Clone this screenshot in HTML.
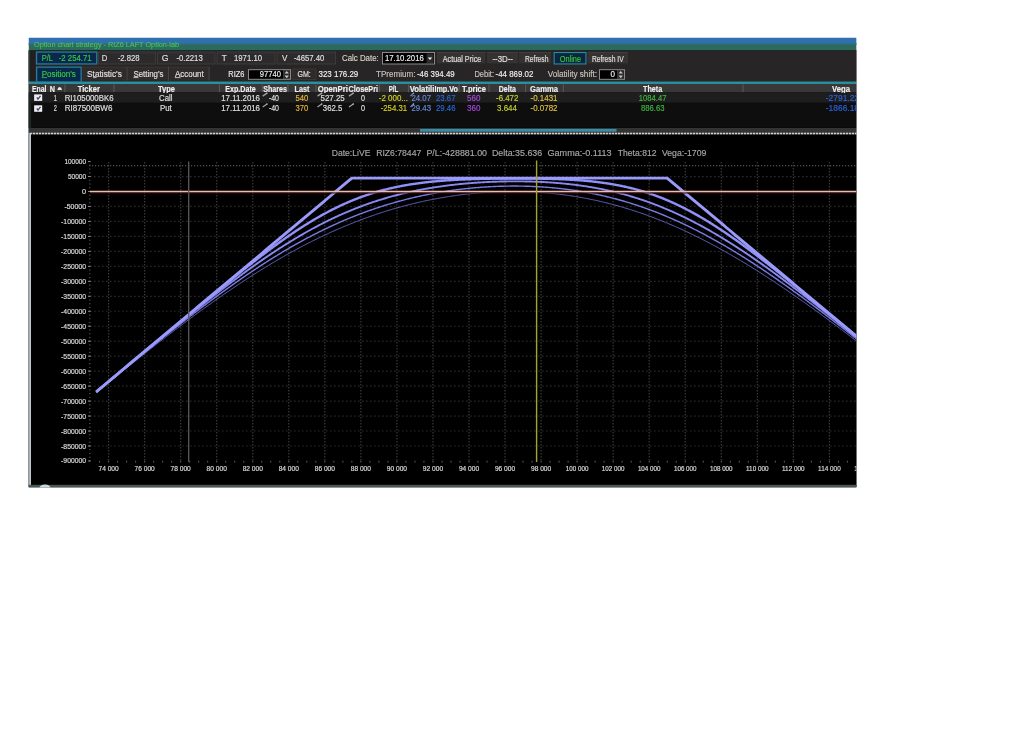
<!DOCTYPE html>
<html><head><meta charset="utf-8"><style>
html,body{margin:0;padding:0;background:#fff;width:1024px;height:742px;overflow:hidden}
svg{display:block;font-family:"Liberation Sans",sans-serif;will-change:transform}
</style></head><body>
<svg width="1024" height="742" viewBox="0 0 1024 742">
<defs><linearGradient id="tg" x1="0" y1="0" x2="0" y2="1"><stop offset="0" stop-color="#3070ae"/><stop offset="1" stop-color="#2e6a5c"/></linearGradient>
<clipPath id="wc"><rect x="28.5" y="37.5" width="828.2" height="450"/></clipPath><clipPath id="cc"><rect x="31" y="134.5" width="825.5" height="350.3"/></clipPath></defs>
<g clip-path="url(#wc)">
<rect x="28.5" y="50" width="828.00" height="437.50" fill="#222222" />
<rect x="28.5" y="37.5" width="828.00" height="6.50" fill="#3070ae" />
<rect x="28.5" y="43.5" width="828.00" height="6.50" fill="#2e6a5c" />
<rect x="28.5" y="43" width="828.0" height="2" fill="url(#tg)"/>
<rect x="28.5" y="50" width="828.00" height="1.00" fill="#1a2a26" />
<text x="34.00" y="47.22" font-size="7.6" fill="#46c850" stroke="#46c850" stroke-width="0.1" textLength="145.00" lengthAdjust="spacingAndGlyphs">Option chart strategy - RIZ6 LAFT Option-lab</text>
<rect x="28.5" y="51" width="828.00" height="30.50" fill="#272525" />
<rect x="28.5" y="51" width="6.50" height="30.50" fill="#231f1f" />
<rect x="35.9" y="51.4" width="61.50" height="13.20" fill="#2a7a9a" />
<rect x="37.2" y="52.7" width="58.90" height="10.60" fill="#08284e" />
<rect x="98" y="51.5" width="58.00" height="13.00" fill="#3c3a3a" />
<rect x="99" y="52.5" width="56.00" height="11.00" fill="#2c2a2a" />
<rect x="99" y="52.5" width="56.00" height="1.00" fill="#343232" />
<rect x="157" y="51.5" width="58.50" height="13.00" fill="#3c3a3a" />
<rect x="158" y="52.5" width="56.50" height="11.00" fill="#2c2a2a" />
<rect x="158" y="52.5" width="56.50" height="1.00" fill="#343232" />
<rect x="216.5" y="51.5" width="59.00" height="13.00" fill="#3c3a3a" />
<rect x="217.5" y="52.5" width="57.00" height="11.00" fill="#2c2a2a" />
<rect x="217.5" y="52.5" width="57.00" height="1.00" fill="#343232" />
<rect x="276.6" y="51.5" width="59.40" height="13.00" fill="#3c3a3a" />
<rect x="277.6" y="52.5" width="57.40" height="11.00" fill="#2c2a2a" />
<rect x="277.6" y="52.5" width="57.40" height="1.00" fill="#343232" />
<text x="41.70" y="61.34" font-size="8.5" fill="#3ccc3c" stroke="#3ccc3c" stroke-width="0.15" textLength="11.30" lengthAdjust="spacingAndGlyphs">P/L</text>
<text x="58.80" y="61.34" font-size="8.5" fill="#3ccc3c" stroke="#3ccc3c" stroke-width="0.15" textLength="32.70" lengthAdjust="spacingAndGlyphs">-2 254.71</text>
<text x="101.70" y="61.34" font-size="8.5" fill="#e0e0e0" stroke="#e0e0e0" stroke-width="0.15" textLength="5.50" lengthAdjust="spacingAndGlyphs">D</text>
<text x="117.70" y="61.34" font-size="8.5" fill="#e0e0e0" stroke="#e0e0e0" stroke-width="0.15" textLength="21.90" lengthAdjust="spacingAndGlyphs">-2.828</text>
<text x="161.80" y="61.34" font-size="8.5" fill="#e0e0e0" stroke="#e0e0e0" stroke-width="0.15" textLength="6.80" lengthAdjust="spacingAndGlyphs">G</text>
<text x="176.40" y="61.34" font-size="8.5" fill="#e0e0e0" stroke="#e0e0e0" stroke-width="0.15" textLength="26.40" lengthAdjust="spacingAndGlyphs">-0.2213</text>
<text x="221.80" y="61.34" font-size="8.5" fill="#e0e0e0" stroke="#e0e0e0" stroke-width="0.15" textLength="5.00" lengthAdjust="spacingAndGlyphs">T</text>
<text x="234.00" y="61.34" font-size="8.5" fill="#e0e0e0" stroke="#e0e0e0" stroke-width="0.15" textLength="28.00" lengthAdjust="spacingAndGlyphs">1971.10</text>
<text x="282.00" y="61.34" font-size="8.5" fill="#e0e0e0" stroke="#e0e0e0" stroke-width="0.15" textLength="5.40" lengthAdjust="spacingAndGlyphs">V</text>
<text x="293.80" y="61.34" font-size="8.5" fill="#e0e0e0" stroke="#e0e0e0" stroke-width="0.15" textLength="30.50" lengthAdjust="spacingAndGlyphs">-4657.40</text>
<text x="342.00" y="61.34" font-size="8.5" fill="#d8d4c8" stroke="#d8d4c8" stroke-width="0.15" textLength="36.70" lengthAdjust="spacingAndGlyphs">Calc Date:</text>
<rect x="382" y="52" width="53.00" height="12.50" fill="#8a8a8a" />
<rect x="383" y="53" width="51.00" height="10.50" fill="#000000" />
<text x="385.00" y="61.34" font-size="8.5" fill="#f0f0f0" stroke="#f0f0f0" stroke-width="0.15" textLength="38.80" lengthAdjust="spacingAndGlyphs">17.10.2016</text>
<rect x="426.5" y="53.5" width="7.00" height="9.50" fill="#2a2a2a" />
<path d="M427.8,57.5 L432.2,57.5 L430,60 Z" fill="#f0f0f0"/>
<rect x="437" y="52" width="48.50" height="12.50" fill="#363232" />
<rect x="437" y="52" width="48.50" height="1.00" fill="#403c3c" />
<rect x="437" y="63.5" width="48.50" height="1.00" fill="#242020" />
<text x="442.70" y="61.94" font-size="8.5" fill="#e0e0e0" stroke="#e0e0e0" stroke-width="0.15" textLength="38.60" lengthAdjust="spacingAndGlyphs">Actual Price</text>
<rect x="487" y="52" width="31.00" height="12.50" fill="#363232" />
<rect x="487" y="52" width="31.00" height="1.00" fill="#403c3c" />
<rect x="487" y="63.5" width="31.00" height="1.00" fill="#242020" />
<text x="492.50" y="61.94" font-size="8.5" fill="#e0e0e0" stroke="#e0e0e0" stroke-width="0.15" textLength="20.50" lengthAdjust="spacingAndGlyphs">--3D--</text>
<rect x="519" y="52" width="32.00" height="12.50" fill="#363232" />
<rect x="519" y="52" width="32.00" height="1.00" fill="#403c3c" />
<rect x="519" y="63.5" width="32.00" height="1.00" fill="#242020" />
<text x="524.90" y="61.94" font-size="8.5" fill="#e0e0e0" stroke="#e0e0e0" stroke-width="0.15" textLength="23.60" lengthAdjust="spacingAndGlyphs">Refresh</text>
<rect x="553.6" y="52" width="32.90" height="12.50" fill="#2a8aa0" />
<rect x="554.7" y="53.1" width="30.70" height="10.30" fill="#0c2640" />
<text x="559.70" y="61.94" font-size="8.5" fill="#38c838" stroke="#38c838" stroke-width="0.15" textLength="21.30" lengthAdjust="spacingAndGlyphs">Online</text>
<rect x="587.6" y="52" width="40.40" height="12.50" fill="#363232" />
<rect x="587.6" y="52" width="40.40" height="1.00" fill="#403c3c" />
<rect x="587.6" y="63.5" width="40.40" height="1.00" fill="#242020" />
<text x="591.90" y="61.94" font-size="8.5" fill="#e0e0e0" stroke="#e0e0e0" stroke-width="0.15" textLength="31.80" lengthAdjust="spacingAndGlyphs">Refresh IV</text>
<rect x="36" y="66.5" width="45.80" height="15.20" fill="#2a7a9a" />
<rect x="37.3" y="67.8" width="43.20" height="13.90" fill="#08284e" />
<rect x="82.3" y="66.7" width="45.30" height="13.80" fill="#2f2b2b" />
<rect x="82.3" y="66.7" width="45.30" height="1.00" fill="#3a3636" />
<line x1="127.1" y1="66.7" x2="127.1" y2="80.5" stroke="#484444" stroke-width="1" />
<rect x="128" y="66.7" width="41.00" height="13.80" fill="#2f2b2b" />
<rect x="128" y="66.7" width="41.00" height="1.00" fill="#3a3636" />
<line x1="168.5" y1="66.7" x2="168.5" y2="80.5" stroke="#484444" stroke-width="1" />
<rect x="169.6" y="66.7" width="40.00" height="13.80" fill="#2f2b2b" />
<rect x="169.6" y="66.7" width="40.00" height="1.00" fill="#3a3636" />
<line x1="209.1" y1="66.7" x2="209.1" y2="80.5" stroke="#484444" stroke-width="1" />
<text x="41.70" y="77.49" font-size="8.5" fill="#3ccc3c" stroke="#3ccc3c" stroke-width="0.15" textLength="34.20" lengthAdjust="spacingAndGlyphs">Position's</text>
<line x1="41.7" y1="77.6" x2="47" y2="77.6" stroke="#3ccc3c" stroke-width="0.8" />
<text x="87.10" y="77.49" font-size="8.5" fill="#e0e0e0" stroke="#e0e0e0" stroke-width="0.15" textLength="34.70" lengthAdjust="spacingAndGlyphs">Statistic's</text>
<line x1="93" y1="77.6" x2="96.5" y2="77.6" stroke="#e0e0e0" stroke-width="0.8" />
<text x="133.40" y="77.49" font-size="8.5" fill="#e0e0e0" stroke="#e0e0e0" stroke-width="0.15" textLength="30.00" lengthAdjust="spacingAndGlyphs">Setting's</text>
<line x1="133.4" y1="77.6" x2="138.5" y2="77.6" stroke="#e0e0e0" stroke-width="0.8" />
<text x="174.90" y="77.49" font-size="8.5" fill="#e0e0e0" stroke="#e0e0e0" stroke-width="0.15" textLength="28.90" lengthAdjust="spacingAndGlyphs">Account</text>
<line x1="174.9" y1="77.6" x2="180.5" y2="77.6" stroke="#e0e0e0" stroke-width="0.8" />
<text x="228.30" y="77.49" font-size="8.5" fill="#e8e8e8" stroke="#e8e8e8" stroke-width="0.15" textLength="16.10" lengthAdjust="spacingAndGlyphs">RIZ6</text>
<rect x="248" y="69.2" width="43.00" height="10.60" fill="#8a8a8a" />
<rect x="249" y="70.2" width="34.50" height="8.60" fill="#000" />
<text x="259.80" y="77.49" font-size="8.5" fill="#f0f0f0" stroke="#f0f0f0" stroke-width="0.15" textLength="21.10" lengthAdjust="spacingAndGlyphs">97740</text>
<rect x="283.5" y="70.2" width="6.50" height="8.60" fill="#2a2a2a" />
<path d="M284.5,73.6 L289,73.6 L286.75,71 Z" fill="#c8c8c8"/><path d="M284.5,75.6 L289,75.6 L286.75,78.2 Z" fill="#c8c8c8"/>
<rect x="292.3" y="68.5" width="24.10" height="11.50" fill="#3a3636" />
<rect x="293.3" y="69.5" width="22.10" height="9.50" fill="#2e2a2a" />
<text x="297.50" y="77.49" font-size="8.5" fill="#e0e0e0" stroke="#e0e0e0" stroke-width="0.15" textLength="13.30" lengthAdjust="spacingAndGlyphs">GM:</text>
<text x="318.50" y="77.49" font-size="8.5" fill="#f0f0f0" stroke="#f0f0f0" stroke-width="0.15" textLength="39.80" lengthAdjust="spacingAndGlyphs">323 176.29</text>
<text x="376.00" y="77.49" font-size="8.5" fill="#c8c4bc" stroke="#c8c4bc" stroke-width="0.15" textLength="39.40" lengthAdjust="spacingAndGlyphs">TPremium:</text>
<text x="416.90" y="77.49" font-size="8.5" fill="#f0f0f0" stroke="#f0f0f0" stroke-width="0.15" textLength="37.80" lengthAdjust="spacingAndGlyphs">-46 394.49</text>
<text x="474.40" y="77.49" font-size="8.5" fill="#c8c4bc" stroke="#c8c4bc" stroke-width="0.15" textLength="19.60" lengthAdjust="spacingAndGlyphs">Debit:</text>
<text x="495.60" y="77.49" font-size="8.5" fill="#f0f0f0" stroke="#f0f0f0" stroke-width="0.15" textLength="37.80" lengthAdjust="spacingAndGlyphs">-44 869.02</text>
<text x="547.70" y="77.49" font-size="8.5" fill="#c8c4bc" stroke="#c8c4bc" stroke-width="0.15" textLength="49.30" lengthAdjust="spacingAndGlyphs">Volatility shift:</text>
<rect x="599" y="69.2" width="26.00" height="10.60" fill="#8a8a8a" />
<rect x="600" y="70.2" width="17.50" height="8.60" fill="#000" />
<text x="610.50" y="77.49" font-size="8.5" fill="#f0f0f0" stroke="#f0f0f0" stroke-width="0.15" textLength="4.50" lengthAdjust="spacingAndGlyphs">0</text>
<rect x="617.5" y="70.2" width="6.50" height="8.60" fill="#2a2a2a" />
<path d="M618.5,73.6 L623,73.6 L620.75,71 Z" fill="#c8c8c8"/><path d="M618.5,75.6 L623,75.6 L620.75,78.2 Z" fill="#c8c8c8"/>
<rect x="28.5" y="50" width="1.30" height="83.00" fill="#2e444a" />
<rect x="28.5" y="81.5" width="828.00" height="2.50" fill="#2a8e9e" />
<rect x="28.5" y="84" width="828.00" height="8.30" fill="#383838" />
<rect x="28.5" y="92.3" width="828.00" height="0.70" fill="#1a1616" />
<line x1="64.9" y1="84.5" x2="64.9" y2="92.2" stroke="#5a5a5a" stroke-width="1" />
<line x1="114" y1="84.5" x2="114" y2="92.2" stroke="#5a5a5a" stroke-width="1" />
<line x1="219.4" y1="84.5" x2="219.4" y2="92.2" stroke="#5a5a5a" stroke-width="1" />
<line x1="262.3" y1="84.5" x2="262.3" y2="92.2" stroke="#5a5a5a" stroke-width="1" />
<line x1="288" y1="84.5" x2="288" y2="92.2" stroke="#5a5a5a" stroke-width="1" />
<line x1="316" y1="84.5" x2="316" y2="92.2" stroke="#5a5a5a" stroke-width="1" />
<line x1="379.4" y1="84.5" x2="379.4" y2="92.2" stroke="#5a5a5a" stroke-width="1" />
<line x1="408.4" y1="84.5" x2="408.4" y2="92.2" stroke="#5a5a5a" stroke-width="1" />
<line x1="459" y1="84.5" x2="459" y2="92.2" stroke="#5a5a5a" stroke-width="1" />
<line x1="489" y1="84.5" x2="489" y2="92.2" stroke="#5a5a5a" stroke-width="1" />
<line x1="525.7" y1="84.5" x2="525.7" y2="92.2" stroke="#5a5a5a" stroke-width="1" />
<line x1="563.3" y1="84.5" x2="563.3" y2="92.2" stroke="#5a5a5a" stroke-width="1" />
<line x1="743" y1="84.5" x2="743" y2="92.2" stroke="#5a5a5a" stroke-width="1" />
<text x="31.90" y="91.64" font-size="8.5" fill="#f0f0f0" font-weight="bold" stroke="#f0f0f0" stroke-width="0.15" textLength="14.60" lengthAdjust="spacingAndGlyphs">Enal</text>
<text x="49.70" y="91.64" font-size="8.5" fill="#f0f0f0" font-weight="bold" stroke="#f0f0f0" stroke-width="0.15" textLength="5.20" lengthAdjust="spacingAndGlyphs">N</text>
<path d="M57.3,89.9 Q57.8,86.9 59.65,86.9 Q61.5,86.9 62,89.9 Z" fill="#e8e8e8"/>
<text x="77.80" y="91.64" font-size="8.5" fill="#f0f0f0" font-weight="bold" stroke="#f0f0f0" stroke-width="0.15" textLength="22.10" lengthAdjust="spacingAndGlyphs">Ticker</text>
<text x="158.00" y="91.64" font-size="8.5" fill="#f0f0f0" font-weight="bold" stroke="#f0f0f0" stroke-width="0.15" textLength="17.00" lengthAdjust="spacingAndGlyphs">Type</text>
<text x="225.30" y="91.64" font-size="8.5" fill="#f0f0f0" font-weight="bold" stroke="#f0f0f0" stroke-width="0.15" textLength="30.50" lengthAdjust="spacingAndGlyphs">Exp.Date</text>
<text x="263.30" y="91.64" font-size="8.5" fill="#f0f0f0" font-weight="bold" stroke="#f0f0f0" stroke-width="0.15" textLength="23.70" lengthAdjust="spacingAndGlyphs">Shares</text>
<text x="294.60" y="91.64" font-size="8.5" fill="#f0f0f0" font-weight="bold" stroke="#f0f0f0" stroke-width="0.15" textLength="14.80" lengthAdjust="spacingAndGlyphs">Last</text>
<text x="317.70" y="91.64" font-size="8.5" fill="#f0f0f0" font-weight="bold" stroke="#f0f0f0" stroke-width="0.15" textLength="30.30" lengthAdjust="spacingAndGlyphs">OpenPri</text>
<text x="348.60" y="91.64" font-size="8.5" fill="#f0f0f0" font-weight="bold" stroke="#f0f0f0" stroke-width="0.15" textLength="29.40" lengthAdjust="spacingAndGlyphs">ClosePri</text>
<text x="388.70" y="91.64" font-size="8.5" fill="#f0f0f0" font-weight="bold" stroke="#f0f0f0" stroke-width="0.15" textLength="9.70" lengthAdjust="spacingAndGlyphs">P/L</text>
<text x="409.70" y="91.64" font-size="8.5" fill="#f0f0f0" font-weight="bold" stroke="#f0f0f0" stroke-width="0.15" textLength="24.70" lengthAdjust="spacingAndGlyphs">Volatili</text>
<text x="434.40" y="91.64" font-size="8.5" fill="#f0f0f0" font-weight="bold" stroke="#f0f0f0" stroke-width="0.15" textLength="23.60" lengthAdjust="spacingAndGlyphs">Imp.Vo</text>
<text x="462.00" y="91.64" font-size="8.5" fill="#f0f0f0" font-weight="bold" stroke="#f0f0f0" stroke-width="0.15" textLength="24.00" lengthAdjust="spacingAndGlyphs">T.price</text>
<text x="498.80" y="91.64" font-size="8.5" fill="#f0f0f0" font-weight="bold" stroke="#f0f0f0" stroke-width="0.15" textLength="17.20" lengthAdjust="spacingAndGlyphs">Delta</text>
<text x="530.00" y="91.64" font-size="8.5" fill="#f0f0f0" font-weight="bold" stroke="#f0f0f0" stroke-width="0.15" textLength="28.00" lengthAdjust="spacingAndGlyphs">Gamma</text>
<text x="643.00" y="91.64" font-size="8.5" fill="#f0f0f0" font-weight="bold" stroke="#f0f0f0" stroke-width="0.15" textLength="19.20" lengthAdjust="spacingAndGlyphs">Theta</text>
<text x="832.00" y="91.64" font-size="8.5" fill="#f0f0f0" font-weight="bold" stroke="#f0f0f0" stroke-width="0.15" textLength="18.00" lengthAdjust="spacingAndGlyphs">Vega</text>
<rect x="28.5" y="93" width="828.00" height="9.60" fill="#1e1e1e" />
<rect x="28.5" y="102.6" width="828.00" height="24.70" fill="#0e0e0e" />
<rect x="28.5" y="127.3" width="828.00" height="0.70" fill="#050505" />
<rect x="28.5" y="93" width="2.70" height="35.00" fill="#1c2626" />
<rect x="34.15" y="94.4" width="8.05" height="6.50" fill="#eeeef6" />
<path d="M36.9,97.4 L38,99.2 L40.5,95.9" stroke="#404864" stroke-width="1.3" fill="none"/>
<text x="53.80" y="100.54" font-size="8.5" fill="#e0e0e0" stroke="#e0e0e0" stroke-width="0.15" textLength="3.10" lengthAdjust="spacingAndGlyphs">1</text>
<text x="64.70" y="100.54" font-size="8.5" fill="#e0e0e0" stroke="#e0e0e0" stroke-width="0.15" textLength="48.90" lengthAdjust="spacingAndGlyphs">RI105000BK6</text>
<text x="159.00" y="100.54" font-size="8.5" fill="#e0e0e0" stroke="#e0e0e0" stroke-width="0.15" textLength="13.50" lengthAdjust="spacingAndGlyphs">Call</text>
<text x="221.25" y="100.54" font-size="8.5" fill="#e0e0e0" stroke="#e0e0e0" stroke-width="0.15" textLength="38.75" lengthAdjust="spacingAndGlyphs">17.11.2016</text>
<line x1="262.7" y1="96.1" x2="267.0" y2="93.1" stroke="#a0a0a0" stroke-width="1.3"/>
<circle cx="267.0" cy="93.1" r="0.7" fill="#c8c8c8"/>
<text x="268.90" y="100.54" font-size="8.5" fill="#e0e0e0" stroke="#e0e0e0" stroke-width="0.15" textLength="10.10" lengthAdjust="spacingAndGlyphs">-40</text>
<text x="295.50" y="100.54" font-size="8.5" fill="#e8b838" stroke="#e8b838" stroke-width="0.15" textLength="12.80" lengthAdjust="spacingAndGlyphs">540</text>
<line x1="317.5" y1="96.1" x2="321.8" y2="93.1" stroke="#a0a0a0" stroke-width="1.3"/>
<circle cx="321.8" cy="93.1" r="0.7" fill="#c8c8c8"/>
<text x="320.50" y="100.54" font-size="8.5" fill="#e0e0e0" stroke="#e0e0e0" stroke-width="0.15" textLength="24.20" lengthAdjust="spacingAndGlyphs">527.25</text>
<line x1="349" y1="96.1" x2="353.3" y2="93.1" stroke="#a0a0a0" stroke-width="1.3"/>
<circle cx="353.3" cy="93.1" r="0.7" fill="#c8c8c8"/>
<text x="361.00" y="100.54" font-size="8.5" fill="#e0e0e0" stroke="#e0e0e0" stroke-width="0.15" textLength="4.00" lengthAdjust="spacingAndGlyphs">0</text>
<text x="378.80" y="100.54" font-size="8.5" fill="#d8d020" stroke="#d8d020" stroke-width="0.15" textLength="29.20" lengthAdjust="spacingAndGlyphs">-2 000...</text>
<line x1="410.5" y1="96.1" x2="413.5" y2="93.1" stroke="#7088d0" stroke-width="1.3"/>
<circle cx="413.5" cy="93.1" r="0.7" fill="#c8c8c8"/>
<text x="411.40" y="100.54" font-size="8.5" fill="#6a88d8" stroke="#6a88d8" stroke-width="0.15" textLength="19.60" lengthAdjust="spacingAndGlyphs">24.07</text>
<text x="436.00" y="100.54" font-size="8.5" fill="#2a68d8" stroke="#2a68d8" stroke-width="0.15" textLength="19.50" lengthAdjust="spacingAndGlyphs">23.67</text>
<text x="467.00" y="100.54" font-size="8.5" fill="#a848e0" stroke="#a848e0" stroke-width="0.15" textLength="13.40" lengthAdjust="spacingAndGlyphs">560</text>
<text x="496.00" y="100.54" font-size="8.5" fill="#c8d430" stroke="#c8d430" stroke-width="0.15" textLength="22.40" lengthAdjust="spacingAndGlyphs">-6.472</text>
<text x="530.50" y="100.54" font-size="8.5" fill="#e0c040" stroke="#e0c040" stroke-width="0.15" textLength="27.00" lengthAdjust="spacingAndGlyphs">-0.1431</text>
<text x="638.75" y="100.54" font-size="8.5" fill="#40b840" stroke="#40b840" stroke-width="0.15" textLength="27.65" lengthAdjust="spacingAndGlyphs">1084.47</text>
<text x="825.80" y="100.54" font-size="8.5" fill="#2a64e0" stroke="#2a64e0" stroke-width="0.15" textLength="33.20" lengthAdjust="spacingAndGlyphs">-2791.22</text>
<rect x="34.15" y="105.30000000000001" width="8.05" height="6.50" fill="#eeeef6" />
<path d="M36.9,108.30000000000001 L38,110.10000000000001 L40.5,106.80000000000001" stroke="#404864" stroke-width="1.3" fill="none"/>
<text x="53.80" y="111.44" font-size="8.5" fill="#e0e0e0" stroke="#e0e0e0" stroke-width="0.15" textLength="3.10" lengthAdjust="spacingAndGlyphs">2</text>
<text x="64.70" y="111.44" font-size="8.5" fill="#e0e0e0" stroke="#e0e0e0" stroke-width="0.15" textLength="47.70" lengthAdjust="spacingAndGlyphs">RI87500BW6</text>
<text x="160.00" y="111.44" font-size="8.5" fill="#e0e0e0" stroke="#e0e0e0" stroke-width="0.15" textLength="11.75" lengthAdjust="spacingAndGlyphs">Put</text>
<text x="221.25" y="111.44" font-size="8.5" fill="#e0e0e0" stroke="#e0e0e0" stroke-width="0.15" textLength="38.75" lengthAdjust="spacingAndGlyphs">17.11.2016</text>
<line x1="262.7" y1="107.0" x2="267.0" y2="104.0" stroke="#a0a0a0" stroke-width="1.3"/>
<circle cx="267.0" cy="104.0" r="0.7" fill="#c8c8c8"/>
<text x="268.90" y="111.44" font-size="8.5" fill="#e0e0e0" stroke="#e0e0e0" stroke-width="0.15" textLength="10.10" lengthAdjust="spacingAndGlyphs">-40</text>
<text x="295.50" y="111.44" font-size="8.5" fill="#e8b838" stroke="#e8b838" stroke-width="0.15" textLength="12.80" lengthAdjust="spacingAndGlyphs">370</text>
<line x1="317.5" y1="107.0" x2="321.8" y2="104.0" stroke="#a0a0a0" stroke-width="1.3"/>
<circle cx="321.8" cy="104.0" r="0.7" fill="#c8c8c8"/>
<text x="322.80" y="111.44" font-size="8.5" fill="#e0e0e0" stroke="#e0e0e0" stroke-width="0.15" textLength="19.50" lengthAdjust="spacingAndGlyphs">362.5</text>
<line x1="349" y1="107.0" x2="353.3" y2="104.0" stroke="#a0a0a0" stroke-width="1.3"/>
<circle cx="353.3" cy="104.0" r="0.7" fill="#c8c8c8"/>
<text x="361.00" y="111.44" font-size="8.5" fill="#e0e0e0" stroke="#e0e0e0" stroke-width="0.15" textLength="4.00" lengthAdjust="spacingAndGlyphs">0</text>
<text x="380.70" y="111.44" font-size="8.5" fill="#d8d020" stroke="#d8d020" stroke-width="0.15" textLength="26.40" lengthAdjust="spacingAndGlyphs">-254.31</text>
<line x1="410.5" y1="107.0" x2="413.5" y2="104.0" stroke="#7088d0" stroke-width="1.3"/>
<circle cx="413.5" cy="104.0" r="0.7" fill="#c8c8c8"/>
<text x="411.40" y="111.44" font-size="8.5" fill="#6a88d8" stroke="#6a88d8" stroke-width="0.15" textLength="19.60" lengthAdjust="spacingAndGlyphs">29.43</text>
<text x="436.00" y="111.44" font-size="8.5" fill="#2a68d8" stroke="#2a68d8" stroke-width="0.15" textLength="19.50" lengthAdjust="spacingAndGlyphs">29.46</text>
<text x="467.00" y="111.44" font-size="8.5" fill="#a848e0" stroke="#a848e0" stroke-width="0.15" textLength="13.40" lengthAdjust="spacingAndGlyphs">360</text>
<text x="497.00" y="111.44" font-size="8.5" fill="#c8d430" stroke="#c8d430" stroke-width="0.15" textLength="19.90" lengthAdjust="spacingAndGlyphs">3.644</text>
<text x="530.50" y="111.44" font-size="8.5" fill="#e0c040" stroke="#e0c040" stroke-width="0.15" textLength="27.00" lengthAdjust="spacingAndGlyphs">-0.0782</text>
<text x="641.00" y="111.44" font-size="8.5" fill="#40b840" stroke="#40b840" stroke-width="0.15" textLength="23.50" lengthAdjust="spacingAndGlyphs">886.63</text>
<text x="825.80" y="111.44" font-size="8.5" fill="#2a64e0" stroke="#2a64e0" stroke-width="0.15" textLength="33.20" lengthAdjust="spacingAndGlyphs">-1866.18</text>
<rect x="28.5" y="128" width="828.00" height="4.60" fill="#333333" />
<rect x="420" y="128.9" width="196.50" height="2.80" fill="#3a8ca4" />
<rect x="28.5" y="132.6" width="828.00" height="2.00" fill="#5a5a5a" />
<line x1="30" y1="133.6" x2="856.5" y2="133.6" stroke="#d0d0d0" stroke-width="1.6" stroke-dasharray="2,1"/>
<rect x="28.5" y="134.6" width="828.00" height="352.90" fill="#000000" />
<rect x="28.5" y="133" width="2.50" height="352.00" fill="#c0c8d0" />
<rect x="28.5" y="133" width="0.80" height="352.00" fill="#687078" />
<rect x="28.5" y="484.8" width="828.00" height="2.20" fill="#4a5656" />
<ellipse cx="45" cy="487.5" rx="5.5" ry="3" fill="#c8d8e0"/>
<g clip-path="url(#cc)">
<line x1="90" y1="445.99" x2="856.5" y2="445.99" stroke="#2a2a2a" stroke-width="1.2" stroke-dasharray="1.6,2.4"/>
<line x1="90" y1="431.02" x2="856.5" y2="431.02" stroke="#2a2a2a" stroke-width="1.2" stroke-dasharray="1.6,2.4"/>
<line x1="90" y1="416.05" x2="856.5" y2="416.05" stroke="#2a2a2a" stroke-width="1.2" stroke-dasharray="1.6,2.4"/>
<line x1="90" y1="401.08" x2="856.5" y2="401.08" stroke="#2a2a2a" stroke-width="1.2" stroke-dasharray="1.6,2.4"/>
<line x1="90" y1="386.11" x2="856.5" y2="386.11" stroke="#2a2a2a" stroke-width="1.2" stroke-dasharray="1.6,2.4"/>
<line x1="90" y1="371.14" x2="856.5" y2="371.14" stroke="#2a2a2a" stroke-width="1.2" stroke-dasharray="1.6,2.4"/>
<line x1="90" y1="356.17" x2="856.5" y2="356.17" stroke="#2a2a2a" stroke-width="1.2" stroke-dasharray="1.6,2.4"/>
<line x1="90" y1="341.20" x2="856.5" y2="341.20" stroke="#2a2a2a" stroke-width="1.2" stroke-dasharray="1.6,2.4"/>
<line x1="90" y1="326.23" x2="856.5" y2="326.23" stroke="#2a2a2a" stroke-width="1.2" stroke-dasharray="1.6,2.4"/>
<line x1="90" y1="311.26" x2="856.5" y2="311.26" stroke="#2a2a2a" stroke-width="1.2" stroke-dasharray="1.6,2.4"/>
<line x1="90" y1="296.29" x2="856.5" y2="296.29" stroke="#2a2a2a" stroke-width="1.2" stroke-dasharray="1.6,2.4"/>
<line x1="90" y1="281.32" x2="856.5" y2="281.32" stroke="#2a2a2a" stroke-width="1.2" stroke-dasharray="1.6,2.4"/>
<line x1="90" y1="266.35" x2="856.5" y2="266.35" stroke="#2a2a2a" stroke-width="1.2" stroke-dasharray="1.6,2.4"/>
<line x1="90" y1="251.38" x2="856.5" y2="251.38" stroke="#2a2a2a" stroke-width="1.2" stroke-dasharray="1.6,2.4"/>
<line x1="90" y1="236.41" x2="856.5" y2="236.41" stroke="#2a2a2a" stroke-width="1.2" stroke-dasharray="1.6,2.4"/>
<line x1="90" y1="221.44" x2="856.5" y2="221.44" stroke="#2a2a2a" stroke-width="1.2" stroke-dasharray="1.6,2.4"/>
<line x1="90" y1="206.47" x2="856.5" y2="206.47" stroke="#2a2a2a" stroke-width="1.2" stroke-dasharray="1.6,2.4"/>
<line x1="90" y1="176.53" x2="856.5" y2="176.53" stroke="#2a2a2a" stroke-width="1.2" stroke-dasharray="1.6,2.4"/>
<line x1="108.60" y1="162" x2="108.60" y2="462" stroke="#3a3a3a" stroke-width="1.2" stroke-dasharray="1.5,1.5"/>
<line x1="144.64" y1="162" x2="144.64" y2="462" stroke="#3a3a3a" stroke-width="1.2" stroke-dasharray="1.5,1.5"/>
<line x1="180.68" y1="162" x2="180.68" y2="462" stroke="#3a3a3a" stroke-width="1.2" stroke-dasharray="1.5,1.5"/>
<line x1="216.72" y1="162" x2="216.72" y2="462" stroke="#3a3a3a" stroke-width="1.2" stroke-dasharray="1.5,1.5"/>
<line x1="252.76" y1="162" x2="252.76" y2="462" stroke="#3a3a3a" stroke-width="1.2" stroke-dasharray="1.5,1.5"/>
<line x1="288.80" y1="162" x2="288.80" y2="462" stroke="#3a3a3a" stroke-width="1.2" stroke-dasharray="1.5,1.5"/>
<line x1="324.84" y1="162" x2="324.84" y2="462" stroke="#3a3a3a" stroke-width="1.2" stroke-dasharray="1.5,1.5"/>
<line x1="360.88" y1="162" x2="360.88" y2="462" stroke="#3a3a3a" stroke-width="1.2" stroke-dasharray="1.5,1.5"/>
<line x1="396.92" y1="162" x2="396.92" y2="462" stroke="#3a3a3a" stroke-width="1.2" stroke-dasharray="1.5,1.5"/>
<line x1="432.96" y1="162" x2="432.96" y2="462" stroke="#3a3a3a" stroke-width="1.2" stroke-dasharray="1.5,1.5"/>
<line x1="469.00" y1="162" x2="469.00" y2="462" stroke="#3a3a3a" stroke-width="1.2" stroke-dasharray="1.5,1.5"/>
<line x1="505.04" y1="162" x2="505.04" y2="462" stroke="#3a3a3a" stroke-width="1.2" stroke-dasharray="1.5,1.5"/>
<line x1="541.08" y1="162" x2="541.08" y2="462" stroke="#3a3a3a" stroke-width="1.2" stroke-dasharray="1.5,1.5"/>
<line x1="577.12" y1="162" x2="577.12" y2="462" stroke="#3a3a3a" stroke-width="1.2" stroke-dasharray="1.5,1.5"/>
<line x1="613.16" y1="162" x2="613.16" y2="462" stroke="#3a3a3a" stroke-width="1.2" stroke-dasharray="1.5,1.5"/>
<line x1="649.20" y1="162" x2="649.20" y2="462" stroke="#3a3a3a" stroke-width="1.2" stroke-dasharray="1.5,1.5"/>
<line x1="685.24" y1="162" x2="685.24" y2="462" stroke="#3a3a3a" stroke-width="1.2" stroke-dasharray="1.5,1.5"/>
<line x1="721.28" y1="162" x2="721.28" y2="462" stroke="#3a3a3a" stroke-width="1.2" stroke-dasharray="1.5,1.5"/>
<line x1="757.32" y1="162" x2="757.32" y2="462" stroke="#3a3a3a" stroke-width="1.2" stroke-dasharray="1.5,1.5"/>
<line x1="793.36" y1="162" x2="793.36" y2="462" stroke="#3a3a3a" stroke-width="1.2" stroke-dasharray="1.5,1.5"/>
<line x1="829.40" y1="162" x2="829.40" y2="462" stroke="#3a3a3a" stroke-width="1.2" stroke-dasharray="1.5,1.5"/>
<line x1="89" y1="165.8" x2="856.5" y2="165.8" stroke="#686868" stroke-width="1.1" stroke-dasharray="1.2,1.8"/>
<line x1="89" y1="460.96000000000004" x2="90.5" y2="460.96000000000004" stroke="#5a5a5a" stroke-width="0.9" />
<line x1="89" y1="457.21750000000003" x2="90.5" y2="457.21750000000003" stroke="#5a5a5a" stroke-width="0.9" />
<line x1="89" y1="453.475" x2="90.5" y2="453.475" stroke="#5a5a5a" stroke-width="0.9" />
<line x1="89" y1="449.7325" x2="90.5" y2="449.7325" stroke="#5a5a5a" stroke-width="0.9" />
<line x1="89" y1="445.99" x2="90.5" y2="445.99" stroke="#5a5a5a" stroke-width="0.9" />
<line x1="89" y1="442.2475" x2="90.5" y2="442.2475" stroke="#5a5a5a" stroke-width="0.9" />
<line x1="89" y1="438.505" x2="90.5" y2="438.505" stroke="#5a5a5a" stroke-width="0.9" />
<line x1="89" y1="434.76250000000005" x2="90.5" y2="434.76250000000005" stroke="#5a5a5a" stroke-width="0.9" />
<line x1="89" y1="431.02" x2="90.5" y2="431.02" stroke="#5a5a5a" stroke-width="0.9" />
<line x1="89" y1="427.27750000000003" x2="90.5" y2="427.27750000000003" stroke="#5a5a5a" stroke-width="0.9" />
<line x1="89" y1="423.53499999999997" x2="90.5" y2="423.53499999999997" stroke="#5a5a5a" stroke-width="0.9" />
<line x1="89" y1="419.7925" x2="90.5" y2="419.7925" stroke="#5a5a5a" stroke-width="0.9" />
<line x1="89" y1="416.05" x2="90.5" y2="416.05" stroke="#5a5a5a" stroke-width="0.9" />
<line x1="89" y1="412.3075" x2="90.5" y2="412.3075" stroke="#5a5a5a" stroke-width="0.9" />
<line x1="89" y1="408.565" x2="90.5" y2="408.565" stroke="#5a5a5a" stroke-width="0.9" />
<line x1="89" y1="404.8225" x2="90.5" y2="404.8225" stroke="#5a5a5a" stroke-width="0.9" />
<line x1="89" y1="401.08000000000004" x2="90.5" y2="401.08000000000004" stroke="#5a5a5a" stroke-width="0.9" />
<line x1="89" y1="397.3375" x2="90.5" y2="397.3375" stroke="#5a5a5a" stroke-width="0.9" />
<line x1="89" y1="393.595" x2="90.5" y2="393.595" stroke="#5a5a5a" stroke-width="0.9" />
<line x1="89" y1="389.8525" x2="90.5" y2="389.8525" stroke="#5a5a5a" stroke-width="0.9" />
<line x1="89" y1="386.11" x2="90.5" y2="386.11" stroke="#5a5a5a" stroke-width="0.9" />
<line x1="89" y1="382.3675" x2="90.5" y2="382.3675" stroke="#5a5a5a" stroke-width="0.9" />
<line x1="89" y1="378.625" x2="90.5" y2="378.625" stroke="#5a5a5a" stroke-width="0.9" />
<line x1="89" y1="374.88250000000005" x2="90.5" y2="374.88250000000005" stroke="#5a5a5a" stroke-width="0.9" />
<line x1="89" y1="371.14" x2="90.5" y2="371.14" stroke="#5a5a5a" stroke-width="0.9" />
<line x1="89" y1="367.39750000000004" x2="90.5" y2="367.39750000000004" stroke="#5a5a5a" stroke-width="0.9" />
<line x1="89" y1="363.655" x2="90.5" y2="363.655" stroke="#5a5a5a" stroke-width="0.9" />
<line x1="89" y1="359.9125" x2="90.5" y2="359.9125" stroke="#5a5a5a" stroke-width="0.9" />
<line x1="89" y1="356.17" x2="90.5" y2="356.17" stroke="#5a5a5a" stroke-width="0.9" />
<line x1="89" y1="352.4275" x2="90.5" y2="352.4275" stroke="#5a5a5a" stroke-width="0.9" />
<line x1="89" y1="348.685" x2="90.5" y2="348.685" stroke="#5a5a5a" stroke-width="0.9" />
<line x1="89" y1="344.9425" x2="90.5" y2="344.9425" stroke="#5a5a5a" stroke-width="0.9" />
<line x1="89" y1="341.20000000000005" x2="90.5" y2="341.20000000000005" stroke="#5a5a5a" stroke-width="0.9" />
<line x1="89" y1="337.4575" x2="90.5" y2="337.4575" stroke="#5a5a5a" stroke-width="0.9" />
<line x1="89" y1="333.71500000000003" x2="90.5" y2="333.71500000000003" stroke="#5a5a5a" stroke-width="0.9" />
<line x1="89" y1="329.97249999999997" x2="90.5" y2="329.97249999999997" stroke="#5a5a5a" stroke-width="0.9" />
<line x1="89" y1="326.23" x2="90.5" y2="326.23" stroke="#5a5a5a" stroke-width="0.9" />
<line x1="89" y1="322.4875" x2="90.5" y2="322.4875" stroke="#5a5a5a" stroke-width="0.9" />
<line x1="89" y1="318.745" x2="90.5" y2="318.745" stroke="#5a5a5a" stroke-width="0.9" />
<line x1="89" y1="315.0025" x2="90.5" y2="315.0025" stroke="#5a5a5a" stroke-width="0.9" />
<line x1="89" y1="311.26" x2="90.5" y2="311.26" stroke="#5a5a5a" stroke-width="0.9" />
<line x1="89" y1="307.5175" x2="90.5" y2="307.5175" stroke="#5a5a5a" stroke-width="0.9" />
<line x1="89" y1="303.775" x2="90.5" y2="303.775" stroke="#5a5a5a" stroke-width="0.9" />
<line x1="89" y1="300.0325" x2="90.5" y2="300.0325" stroke="#5a5a5a" stroke-width="0.9" />
<line x1="89" y1="296.29" x2="90.5" y2="296.29" stroke="#5a5a5a" stroke-width="0.9" />
<line x1="89" y1="292.5475" x2="90.5" y2="292.5475" stroke="#5a5a5a" stroke-width="0.9" />
<line x1="89" y1="288.805" x2="90.5" y2="288.805" stroke="#5a5a5a" stroke-width="0.9" />
<line x1="89" y1="285.0625" x2="90.5" y2="285.0625" stroke="#5a5a5a" stroke-width="0.9" />
<line x1="89" y1="281.32" x2="90.5" y2="281.32" stroke="#5a5a5a" stroke-width="0.9" />
<line x1="89" y1="277.5775" x2="90.5" y2="277.5775" stroke="#5a5a5a" stroke-width="0.9" />
<line x1="89" y1="273.83500000000004" x2="90.5" y2="273.83500000000004" stroke="#5a5a5a" stroke-width="0.9" />
<line x1="89" y1="270.0925" x2="90.5" y2="270.0925" stroke="#5a5a5a" stroke-width="0.9" />
<line x1="89" y1="266.35" x2="90.5" y2="266.35" stroke="#5a5a5a" stroke-width="0.9" />
<line x1="89" y1="262.6075" x2="90.5" y2="262.6075" stroke="#5a5a5a" stroke-width="0.9" />
<line x1="89" y1="258.865" x2="90.5" y2="258.865" stroke="#5a5a5a" stroke-width="0.9" />
<line x1="89" y1="255.1225" x2="90.5" y2="255.1225" stroke="#5a5a5a" stroke-width="0.9" />
<line x1="89" y1="251.38" x2="90.5" y2="251.38" stroke="#5a5a5a" stroke-width="0.9" />
<line x1="89" y1="247.6375" x2="90.5" y2="247.6375" stroke="#5a5a5a" stroke-width="0.9" />
<line x1="89" y1="243.895" x2="90.5" y2="243.895" stroke="#5a5a5a" stroke-width="0.9" />
<line x1="89" y1="240.1525" x2="90.5" y2="240.1525" stroke="#5a5a5a" stroke-width="0.9" />
<line x1="89" y1="236.41" x2="90.5" y2="236.41" stroke="#5a5a5a" stroke-width="0.9" />
<line x1="89" y1="232.66750000000002" x2="90.5" y2="232.66750000000002" stroke="#5a5a5a" stroke-width="0.9" />
<line x1="89" y1="228.925" x2="90.5" y2="228.925" stroke="#5a5a5a" stroke-width="0.9" />
<line x1="89" y1="225.1825" x2="90.5" y2="225.1825" stroke="#5a5a5a" stroke-width="0.9" />
<line x1="89" y1="221.44" x2="90.5" y2="221.44" stroke="#5a5a5a" stroke-width="0.9" />
<line x1="89" y1="217.6975" x2="90.5" y2="217.6975" stroke="#5a5a5a" stroke-width="0.9" />
<line x1="89" y1="213.955" x2="90.5" y2="213.955" stroke="#5a5a5a" stroke-width="0.9" />
<line x1="89" y1="210.2125" x2="90.5" y2="210.2125" stroke="#5a5a5a" stroke-width="0.9" />
<line x1="89" y1="206.47" x2="90.5" y2="206.47" stroke="#5a5a5a" stroke-width="0.9" />
<line x1="89" y1="202.7275" x2="90.5" y2="202.7275" stroke="#5a5a5a" stroke-width="0.9" />
<line x1="89" y1="198.985" x2="90.5" y2="198.985" stroke="#5a5a5a" stroke-width="0.9" />
<line x1="89" y1="195.2425" x2="90.5" y2="195.2425" stroke="#5a5a5a" stroke-width="0.9" />
<line x1="89" y1="191.5" x2="90.5" y2="191.5" stroke="#5a5a5a" stroke-width="0.9" />
<line x1="89" y1="187.7575" x2="90.5" y2="187.7575" stroke="#5a5a5a" stroke-width="0.9" />
<line x1="89" y1="184.015" x2="90.5" y2="184.015" stroke="#5a5a5a" stroke-width="0.9" />
<line x1="89" y1="180.2725" x2="90.5" y2="180.2725" stroke="#5a5a5a" stroke-width="0.9" />
<line x1="89" y1="176.53" x2="90.5" y2="176.53" stroke="#5a5a5a" stroke-width="0.9" />
<line x1="89" y1="172.7875" x2="90.5" y2="172.7875" stroke="#5a5a5a" stroke-width="0.9" />
<line x1="89" y1="169.045" x2="90.5" y2="169.045" stroke="#5a5a5a" stroke-width="0.9" />
<line x1="89" y1="165.3025" x2="90.5" y2="165.3025" stroke="#5a5a5a" stroke-width="0.9" />
<line x1="88" y1="460.96000000000004" x2="90.7" y2="460.96000000000004" stroke="#8a8a8a" stroke-width="1" />
<text x="61.10" y="463.47" font-size="7" fill="#d8d8d8" stroke="#d8d8d8" stroke-width="0.2" textLength="25.00" lengthAdjust="spacingAndGlyphs">-900000</text>
<line x1="88" y1="445.99" x2="90.7" y2="445.99" stroke="#8a8a8a" stroke-width="1" />
<text x="61.10" y="448.50" font-size="7" fill="#d8d8d8" stroke="#d8d8d8" stroke-width="0.2" textLength="25.00" lengthAdjust="spacingAndGlyphs">-850000</text>
<line x1="88" y1="431.02" x2="90.7" y2="431.02" stroke="#8a8a8a" stroke-width="1" />
<text x="61.10" y="433.53" font-size="7" fill="#d8d8d8" stroke="#d8d8d8" stroke-width="0.2" textLength="25.00" lengthAdjust="spacingAndGlyphs">-800000</text>
<line x1="88" y1="416.05" x2="90.7" y2="416.05" stroke="#8a8a8a" stroke-width="1" />
<text x="61.10" y="418.56" font-size="7" fill="#d8d8d8" stroke="#d8d8d8" stroke-width="0.2" textLength="25.00" lengthAdjust="spacingAndGlyphs">-750000</text>
<line x1="88" y1="401.08000000000004" x2="90.7" y2="401.08000000000004" stroke="#8a8a8a" stroke-width="1" />
<text x="61.10" y="403.59" font-size="7" fill="#d8d8d8" stroke="#d8d8d8" stroke-width="0.2" textLength="25.00" lengthAdjust="spacingAndGlyphs">-700000</text>
<line x1="88" y1="386.11" x2="90.7" y2="386.11" stroke="#8a8a8a" stroke-width="1" />
<text x="61.10" y="388.62" font-size="7" fill="#d8d8d8" stroke="#d8d8d8" stroke-width="0.2" textLength="25.00" lengthAdjust="spacingAndGlyphs">-650000</text>
<line x1="88" y1="371.14" x2="90.7" y2="371.14" stroke="#8a8a8a" stroke-width="1" />
<text x="61.10" y="373.65" font-size="7" fill="#d8d8d8" stroke="#d8d8d8" stroke-width="0.2" textLength="25.00" lengthAdjust="spacingAndGlyphs">-600000</text>
<line x1="88" y1="356.17" x2="90.7" y2="356.17" stroke="#8a8a8a" stroke-width="1" />
<text x="61.10" y="358.68" font-size="7" fill="#d8d8d8" stroke="#d8d8d8" stroke-width="0.2" textLength="25.00" lengthAdjust="spacingAndGlyphs">-550000</text>
<line x1="88" y1="341.20000000000005" x2="90.7" y2="341.20000000000005" stroke="#8a8a8a" stroke-width="1" />
<text x="61.10" y="343.71" font-size="7" fill="#d8d8d8" stroke="#d8d8d8" stroke-width="0.2" textLength="25.00" lengthAdjust="spacingAndGlyphs">-500000</text>
<line x1="88" y1="326.23" x2="90.7" y2="326.23" stroke="#8a8a8a" stroke-width="1" />
<text x="61.10" y="328.74" font-size="7" fill="#d8d8d8" stroke="#d8d8d8" stroke-width="0.2" textLength="25.00" lengthAdjust="spacingAndGlyphs">-450000</text>
<line x1="88" y1="311.26" x2="90.7" y2="311.26" stroke="#8a8a8a" stroke-width="1" />
<text x="61.10" y="313.77" font-size="7" fill="#d8d8d8" stroke="#d8d8d8" stroke-width="0.2" textLength="25.00" lengthAdjust="spacingAndGlyphs">-400000</text>
<line x1="88" y1="296.29" x2="90.7" y2="296.29" stroke="#8a8a8a" stroke-width="1" />
<text x="61.10" y="298.80" font-size="7" fill="#d8d8d8" stroke="#d8d8d8" stroke-width="0.2" textLength="25.00" lengthAdjust="spacingAndGlyphs">-350000</text>
<line x1="88" y1="281.32" x2="90.7" y2="281.32" stroke="#8a8a8a" stroke-width="1" />
<text x="61.10" y="283.83" font-size="7" fill="#d8d8d8" stroke="#d8d8d8" stroke-width="0.2" textLength="25.00" lengthAdjust="spacingAndGlyphs">-300000</text>
<line x1="88" y1="266.35" x2="90.7" y2="266.35" stroke="#8a8a8a" stroke-width="1" />
<text x="61.10" y="268.86" font-size="7" fill="#d8d8d8" stroke="#d8d8d8" stroke-width="0.2" textLength="25.00" lengthAdjust="spacingAndGlyphs">-250000</text>
<line x1="88" y1="251.38" x2="90.7" y2="251.38" stroke="#8a8a8a" stroke-width="1" />
<text x="61.10" y="253.89" font-size="7" fill="#d8d8d8" stroke="#d8d8d8" stroke-width="0.2" textLength="25.00" lengthAdjust="spacingAndGlyphs">-200000</text>
<line x1="88" y1="236.41" x2="90.7" y2="236.41" stroke="#8a8a8a" stroke-width="1" />
<text x="61.10" y="238.92" font-size="7" fill="#d8d8d8" stroke="#d8d8d8" stroke-width="0.2" textLength="25.00" lengthAdjust="spacingAndGlyphs">-150000</text>
<line x1="88" y1="221.44" x2="90.7" y2="221.44" stroke="#8a8a8a" stroke-width="1" />
<text x="61.10" y="223.95" font-size="7" fill="#d8d8d8" stroke="#d8d8d8" stroke-width="0.2" textLength="25.00" lengthAdjust="spacingAndGlyphs">-100000</text>
<line x1="88" y1="206.47" x2="90.7" y2="206.47" stroke="#8a8a8a" stroke-width="1" />
<text x="64.40" y="208.98" font-size="7" fill="#d8d8d8" stroke="#d8d8d8" stroke-width="0.2" textLength="21.70" lengthAdjust="spacingAndGlyphs">-50000</text>
<line x1="88" y1="191.5" x2="90.7" y2="191.5" stroke="#8a8a8a" stroke-width="1" />
<text x="82.00" y="194.01" font-size="7" fill="#d8d8d8" stroke="#d8d8d8" stroke-width="0.2" textLength="4.10" lengthAdjust="spacingAndGlyphs">0</text>
<line x1="88" y1="176.53" x2="90.7" y2="176.53" stroke="#8a8a8a" stroke-width="1" />
<text x="67.90" y="179.04" font-size="7" fill="#d8d8d8" stroke="#d8d8d8" stroke-width="0.2" textLength="18.20" lengthAdjust="spacingAndGlyphs">50000</text>
<line x1="88" y1="161.56" x2="90.7" y2="161.56" stroke="#8a8a8a" stroke-width="1" />
<text x="64.40" y="164.07" font-size="7" fill="#d8d8d8" stroke="#d8d8d8" stroke-width="0.2" textLength="21.70" lengthAdjust="spacingAndGlyphs">100000</text>
<line x1="99.58999999999999" y1="460.8" x2="99.58999999999999" y2="462.5" stroke="#606060" stroke-width="1" />
<line x1="108.6" y1="460.8" x2="108.6" y2="462.5" stroke="#606060" stroke-width="1" />
<line x1="117.61" y1="460.8" x2="117.61" y2="462.5" stroke="#606060" stroke-width="1" />
<line x1="126.61999999999999" y1="460.8" x2="126.61999999999999" y2="462.5" stroke="#606060" stroke-width="1" />
<line x1="135.63" y1="460.8" x2="135.63" y2="462.5" stroke="#606060" stroke-width="1" />
<line x1="144.64" y1="460.8" x2="144.64" y2="462.5" stroke="#606060" stroke-width="1" />
<line x1="153.65" y1="460.8" x2="153.65" y2="462.5" stroke="#606060" stroke-width="1" />
<line x1="162.66" y1="460.8" x2="162.66" y2="462.5" stroke="#606060" stroke-width="1" />
<line x1="171.67000000000002" y1="460.8" x2="171.67000000000002" y2="462.5" stroke="#606060" stroke-width="1" />
<line x1="180.68" y1="460.8" x2="180.68" y2="462.5" stroke="#606060" stroke-width="1" />
<line x1="189.69" y1="460.8" x2="189.69" y2="462.5" stroke="#606060" stroke-width="1" />
<line x1="198.7" y1="460.8" x2="198.7" y2="462.5" stroke="#606060" stroke-width="1" />
<line x1="207.71" y1="460.8" x2="207.71" y2="462.5" stroke="#606060" stroke-width="1" />
<line x1="216.72" y1="460.8" x2="216.72" y2="462.5" stroke="#606060" stroke-width="1" />
<line x1="225.73000000000002" y1="460.8" x2="225.73000000000002" y2="462.5" stroke="#606060" stroke-width="1" />
<line x1="234.74" y1="460.8" x2="234.74" y2="462.5" stroke="#606060" stroke-width="1" />
<line x1="243.75" y1="460.8" x2="243.75" y2="462.5" stroke="#606060" stroke-width="1" />
<line x1="252.76" y1="460.8" x2="252.76" y2="462.5" stroke="#606060" stroke-width="1" />
<line x1="261.77" y1="460.8" x2="261.77" y2="462.5" stroke="#606060" stroke-width="1" />
<line x1="270.78" y1="460.8" x2="270.78" y2="462.5" stroke="#606060" stroke-width="1" />
<line x1="279.79" y1="460.8" x2="279.79" y2="462.5" stroke="#606060" stroke-width="1" />
<line x1="288.8" y1="460.8" x2="288.8" y2="462.5" stroke="#606060" stroke-width="1" />
<line x1="297.81" y1="460.8" x2="297.81" y2="462.5" stroke="#606060" stroke-width="1" />
<line x1="306.82000000000005" y1="460.8" x2="306.82000000000005" y2="462.5" stroke="#606060" stroke-width="1" />
<line x1="315.83000000000004" y1="460.8" x2="315.83000000000004" y2="462.5" stroke="#606060" stroke-width="1" />
<line x1="324.84000000000003" y1="460.8" x2="324.84000000000003" y2="462.5" stroke="#606060" stroke-width="1" />
<line x1="333.85" y1="460.8" x2="333.85" y2="462.5" stroke="#606060" stroke-width="1" />
<line x1="342.86" y1="460.8" x2="342.86" y2="462.5" stroke="#606060" stroke-width="1" />
<line x1="351.87" y1="460.8" x2="351.87" y2="462.5" stroke="#606060" stroke-width="1" />
<line x1="360.88" y1="460.8" x2="360.88" y2="462.5" stroke="#606060" stroke-width="1" />
<line x1="369.89" y1="460.8" x2="369.89" y2="462.5" stroke="#606060" stroke-width="1" />
<line x1="378.9" y1="460.8" x2="378.9" y2="462.5" stroke="#606060" stroke-width="1" />
<line x1="387.90999999999997" y1="460.8" x2="387.90999999999997" y2="462.5" stroke="#606060" stroke-width="1" />
<line x1="396.91999999999996" y1="460.8" x2="396.91999999999996" y2="462.5" stroke="#606060" stroke-width="1" />
<line x1="405.93000000000006" y1="460.8" x2="405.93000000000006" y2="462.5" stroke="#606060" stroke-width="1" />
<line x1="414.94000000000005" y1="460.8" x2="414.94000000000005" y2="462.5" stroke="#606060" stroke-width="1" />
<line x1="423.95000000000005" y1="460.8" x2="423.95000000000005" y2="462.5" stroke="#606060" stroke-width="1" />
<line x1="432.96000000000004" y1="460.8" x2="432.96000000000004" y2="462.5" stroke="#606060" stroke-width="1" />
<line x1="441.97" y1="460.8" x2="441.97" y2="462.5" stroke="#606060" stroke-width="1" />
<line x1="450.98" y1="460.8" x2="450.98" y2="462.5" stroke="#606060" stroke-width="1" />
<line x1="459.99" y1="460.8" x2="459.99" y2="462.5" stroke="#606060" stroke-width="1" />
<line x1="469.0" y1="460.8" x2="469.0" y2="462.5" stroke="#606060" stroke-width="1" />
<line x1="478.01" y1="460.8" x2="478.01" y2="462.5" stroke="#606060" stroke-width="1" />
<line x1="487.02" y1="460.8" x2="487.02" y2="462.5" stroke="#606060" stroke-width="1" />
<line x1="496.03" y1="460.8" x2="496.03" y2="462.5" stroke="#606060" stroke-width="1" />
<line x1="505.0400000000001" y1="460.8" x2="505.0400000000001" y2="462.5" stroke="#606060" stroke-width="1" />
<line x1="514.0500000000001" y1="460.8" x2="514.0500000000001" y2="462.5" stroke="#606060" stroke-width="1" />
<line x1="523.0600000000001" y1="460.8" x2="523.0600000000001" y2="462.5" stroke="#606060" stroke-width="1" />
<line x1="532.07" y1="460.8" x2="532.07" y2="462.5" stroke="#606060" stroke-width="1" />
<line x1="541.08" y1="460.8" x2="541.08" y2="462.5" stroke="#606060" stroke-width="1" />
<line x1="550.09" y1="460.8" x2="550.09" y2="462.5" stroke="#606060" stroke-width="1" />
<line x1="559.1" y1="460.8" x2="559.1" y2="462.5" stroke="#606060" stroke-width="1" />
<line x1="568.11" y1="460.8" x2="568.11" y2="462.5" stroke="#606060" stroke-width="1" />
<line x1="577.12" y1="460.8" x2="577.12" y2="462.5" stroke="#606060" stroke-width="1" />
<line x1="586.13" y1="460.8" x2="586.13" y2="462.5" stroke="#606060" stroke-width="1" />
<line x1="595.14" y1="460.8" x2="595.14" y2="462.5" stroke="#606060" stroke-width="1" />
<line x1="604.15" y1="460.8" x2="604.15" y2="462.5" stroke="#606060" stroke-width="1" />
<line x1="613.1600000000001" y1="460.8" x2="613.1600000000001" y2="462.5" stroke="#606060" stroke-width="1" />
<line x1="622.1700000000001" y1="460.8" x2="622.1700000000001" y2="462.5" stroke="#606060" stroke-width="1" />
<line x1="631.1800000000001" y1="460.8" x2="631.1800000000001" y2="462.5" stroke="#606060" stroke-width="1" />
<line x1="640.19" y1="460.8" x2="640.19" y2="462.5" stroke="#606060" stroke-width="1" />
<line x1="649.2" y1="460.8" x2="649.2" y2="462.5" stroke="#606060" stroke-width="1" />
<line x1="658.21" y1="460.8" x2="658.21" y2="462.5" stroke="#606060" stroke-width="1" />
<line x1="667.22" y1="460.8" x2="667.22" y2="462.5" stroke="#606060" stroke-width="1" />
<line x1="676.23" y1="460.8" x2="676.23" y2="462.5" stroke="#606060" stroke-width="1" />
<line x1="685.24" y1="460.8" x2="685.24" y2="462.5" stroke="#606060" stroke-width="1" />
<line x1="694.2500000000001" y1="460.8" x2="694.2500000000001" y2="462.5" stroke="#606060" stroke-width="1" />
<line x1="703.2600000000001" y1="460.8" x2="703.2600000000001" y2="462.5" stroke="#606060" stroke-width="1" />
<line x1="712.2700000000001" y1="460.8" x2="712.2700000000001" y2="462.5" stroke="#606060" stroke-width="1" />
<line x1="721.2800000000001" y1="460.8" x2="721.2800000000001" y2="462.5" stroke="#606060" stroke-width="1" />
<line x1="730.2900000000001" y1="460.8" x2="730.2900000000001" y2="462.5" stroke="#606060" stroke-width="1" />
<line x1="739.3000000000001" y1="460.8" x2="739.3000000000001" y2="462.5" stroke="#606060" stroke-width="1" />
<line x1="748.3100000000001" y1="460.8" x2="748.3100000000001" y2="462.5" stroke="#606060" stroke-width="1" />
<line x1="757.32" y1="460.8" x2="757.32" y2="462.5" stroke="#606060" stroke-width="1" />
<line x1="766.33" y1="460.8" x2="766.33" y2="462.5" stroke="#606060" stroke-width="1" />
<line x1="775.34" y1="460.8" x2="775.34" y2="462.5" stroke="#606060" stroke-width="1" />
<line x1="784.35" y1="460.8" x2="784.35" y2="462.5" stroke="#606060" stroke-width="1" />
<line x1="793.3600000000001" y1="460.8" x2="793.3600000000001" y2="462.5" stroke="#606060" stroke-width="1" />
<line x1="802.3700000000001" y1="460.8" x2="802.3700000000001" y2="462.5" stroke="#606060" stroke-width="1" />
<line x1="811.3800000000001" y1="460.8" x2="811.3800000000001" y2="462.5" stroke="#606060" stroke-width="1" />
<line x1="820.3900000000001" y1="460.8" x2="820.3900000000001" y2="462.5" stroke="#606060" stroke-width="1" />
<line x1="829.4000000000001" y1="460.8" x2="829.4000000000001" y2="462.5" stroke="#606060" stroke-width="1" />
<line x1="838.4100000000001" y1="460.8" x2="838.4100000000001" y2="462.5" stroke="#606060" stroke-width="1" />
<line x1="847.4200000000001" y1="460.8" x2="847.4200000000001" y2="462.5" stroke="#606060" stroke-width="1" />
<line x1="856.4300000000001" y1="460.8" x2="856.4300000000001" y2="462.5" stroke="#606060" stroke-width="1" />
<text x="98.50" y="470.51" font-size="7" fill="#d8d8d8" stroke="#d8d8d8" stroke-width="0.2" textLength="20.20" lengthAdjust="spacingAndGlyphs">74 000</text>
<text x="134.54" y="470.51" font-size="7" fill="#d8d8d8" stroke="#d8d8d8" stroke-width="0.2" textLength="20.20" lengthAdjust="spacingAndGlyphs">76 000</text>
<text x="170.58" y="470.51" font-size="7" fill="#d8d8d8" stroke="#d8d8d8" stroke-width="0.2" textLength="20.20" lengthAdjust="spacingAndGlyphs">78 000</text>
<text x="206.62" y="470.51" font-size="7" fill="#d8d8d8" stroke="#d8d8d8" stroke-width="0.2" textLength="20.20" lengthAdjust="spacingAndGlyphs">80 000</text>
<text x="242.66" y="470.51" font-size="7" fill="#d8d8d8" stroke="#d8d8d8" stroke-width="0.2" textLength="20.20" lengthAdjust="spacingAndGlyphs">82 000</text>
<text x="278.70" y="470.51" font-size="7" fill="#d8d8d8" stroke="#d8d8d8" stroke-width="0.2" textLength="20.20" lengthAdjust="spacingAndGlyphs">84 000</text>
<text x="314.74" y="470.51" font-size="7" fill="#d8d8d8" stroke="#d8d8d8" stroke-width="0.2" textLength="20.20" lengthAdjust="spacingAndGlyphs">86 000</text>
<text x="350.78" y="470.51" font-size="7" fill="#d8d8d8" stroke="#d8d8d8" stroke-width="0.2" textLength="20.20" lengthAdjust="spacingAndGlyphs">88 000</text>
<text x="386.82" y="470.51" font-size="7" fill="#d8d8d8" stroke="#d8d8d8" stroke-width="0.2" textLength="20.20" lengthAdjust="spacingAndGlyphs">90 000</text>
<text x="422.86" y="470.51" font-size="7" fill="#d8d8d8" stroke="#d8d8d8" stroke-width="0.2" textLength="20.20" lengthAdjust="spacingAndGlyphs">92 000</text>
<text x="458.90" y="470.51" font-size="7" fill="#d8d8d8" stroke="#d8d8d8" stroke-width="0.2" textLength="20.20" lengthAdjust="spacingAndGlyphs">94 000</text>
<text x="494.94" y="470.51" font-size="7" fill="#d8d8d8" stroke="#d8d8d8" stroke-width="0.2" textLength="20.20" lengthAdjust="spacingAndGlyphs">96 000</text>
<text x="530.98" y="470.51" font-size="7" fill="#d8d8d8" stroke="#d8d8d8" stroke-width="0.2" textLength="20.20" lengthAdjust="spacingAndGlyphs">98 000</text>
<text x="565.82" y="470.51" font-size="7" fill="#d8d8d8" stroke="#d8d8d8" stroke-width="0.2" textLength="22.60" lengthAdjust="spacingAndGlyphs">100 000</text>
<text x="601.86" y="470.51" font-size="7" fill="#d8d8d8" stroke="#d8d8d8" stroke-width="0.2" textLength="22.60" lengthAdjust="spacingAndGlyphs">102 000</text>
<text x="637.90" y="470.51" font-size="7" fill="#d8d8d8" stroke="#d8d8d8" stroke-width="0.2" textLength="22.60" lengthAdjust="spacingAndGlyphs">104 000</text>
<text x="673.94" y="470.51" font-size="7" fill="#d8d8d8" stroke="#d8d8d8" stroke-width="0.2" textLength="22.60" lengthAdjust="spacingAndGlyphs">106 000</text>
<text x="709.98" y="470.51" font-size="7" fill="#d8d8d8" stroke="#d8d8d8" stroke-width="0.2" textLength="22.60" lengthAdjust="spacingAndGlyphs">108 000</text>
<text x="746.02" y="470.51" font-size="7" fill="#d8d8d8" stroke="#d8d8d8" stroke-width="0.2" textLength="22.60" lengthAdjust="spacingAndGlyphs">110 000</text>
<text x="782.06" y="470.51" font-size="7" fill="#d8d8d8" stroke="#d8d8d8" stroke-width="0.2" textLength="22.60" lengthAdjust="spacingAndGlyphs">112 000</text>
<text x="818.10" y="470.51" font-size="7" fill="#d8d8d8" stroke="#d8d8d8" stroke-width="0.2" textLength="22.60" lengthAdjust="spacingAndGlyphs">114 000</text>
<text x="854.14" y="470.51" font-size="7" fill="#d8d8d8" stroke="#d8d8d8" stroke-width="0.2" textLength="22.60" lengthAdjust="spacingAndGlyphs">116 000</text>
<text x="331.70" y="156.07" font-size="8.3" fill="#a8a8a8" stroke="#a8a8a8" stroke-width="0.15" textLength="38.70" lengthAdjust="spacingAndGlyphs">Date:LiVE</text>
<text x="376.25" y="156.07" font-size="8.3" fill="#a8a8a8" stroke="#a8a8a8" stroke-width="0.15" textLength="44.95" lengthAdjust="spacingAndGlyphs">RIZ6:78447</text>
<text x="426.40" y="156.07" font-size="8.3" fill="#a8a8a8" stroke="#a8a8a8" stroke-width="0.15" textLength="60.60" lengthAdjust="spacingAndGlyphs">P/L:-428881.00</text>
<text x="491.90" y="156.07" font-size="8.3" fill="#a8a8a8" stroke="#a8a8a8" stroke-width="0.15" textLength="50.30" lengthAdjust="spacingAndGlyphs">Delta:35.636</text>
<text x="547.50" y="156.07" font-size="8.3" fill="#a8a8a8" stroke="#a8a8a8" stroke-width="0.15" textLength="64.10" lengthAdjust="spacingAndGlyphs">Gamma:-0.1113</text>
<text x="617.80" y="156.07" font-size="8.3" fill="#a8a8a8" stroke="#a8a8a8" stroke-width="0.15" textLength="38.70" lengthAdjust="spacingAndGlyphs">Theta:812</text>
<text x="662.00" y="156.07" font-size="8.3" fill="#a8a8a8" stroke="#a8a8a8" stroke-width="0.15" textLength="44.30" lengthAdjust="spacingAndGlyphs">Vega:-1709</text>
<polyline points="96.20,392.59 97.10,391.85 98.00,391.12 98.91,390.38 99.81,389.64 100.71,388.91 101.61,388.17 102.51,387.44 103.41,386.70 104.31,385.97 105.21,385.24 106.11,384.50 107.01,383.77 107.92,383.04 108.82,382.31 109.72,381.57 110.62,380.84 111.52,380.11 112.42,379.38 113.32,378.65 114.22,377.92 115.12,377.19 116.02,376.46 116.93,375.73 117.83,375.00 118.73,374.28 119.63,373.55 120.53,372.82 121.43,372.10 122.33,371.37 123.23,370.64 124.13,369.92 125.03,369.20 125.94,368.47 126.84,367.75 127.74,367.02 128.64,366.30 129.54,365.58 130.44,364.86 131.34,364.14 132.24,363.42 133.14,362.70 134.04,361.98 134.95,361.26 135.85,360.54 136.75,359.82 137.65,359.11 138.55,358.39 139.45,357.67 140.35,356.96 141.25,356.24 142.15,355.53 143.05,354.82 143.96,354.10 144.86,353.39 145.76,352.68 146.66,351.97 147.56,351.26 148.46,350.55 149.36,349.84 150.26,349.13 151.16,348.42 152.06,347.72 152.97,347.01 153.87,346.31 154.77,345.60 155.67,344.90 156.57,344.19 157.47,343.49 158.37,342.79 159.27,342.09 160.17,341.39 161.07,340.69 161.98,339.99 162.88,339.29 163.78,338.60 164.68,337.90 165.58,337.20 166.48,336.51 167.38,335.82 168.28,335.12 169.18,334.43 170.08,333.74 170.99,333.05 171.89,332.36 172.79,331.67 173.69,330.98 174.59,330.30 175.49,329.61 176.39,328.93 177.29,328.24 178.19,327.56 179.09,326.88 180.00,326.20 180.90,325.52 181.80,324.84 182.70,324.16 183.60,323.48 184.50,322.80 185.40,322.13 186.30,321.45 187.20,320.78 188.10,320.11 189.01,319.44 189.91,318.77 190.81,318.10 191.71,317.43 192.61,316.76 193.51,316.10 194.41,315.43 195.31,314.77 196.21,314.11 197.11,313.45 198.02,312.79 198.92,312.13 199.82,311.47 200.72,310.81 201.62,310.16 202.52,309.50 203.42,308.85 204.32,308.20 205.22,307.55 206.12,306.90 207.03,306.25 207.93,305.60 208.83,304.95 209.73,304.31 210.63,303.67 211.53,303.02 212.43,302.38 213.33,301.74 214.23,301.10 215.13,300.47 216.04,299.83 216.94,299.20 217.84,298.56 218.74,297.93 219.64,297.30 220.54,296.67 221.44,296.05 222.34,295.42 223.24,294.79 224.14,294.17 225.05,293.55 225.95,292.93 226.85,292.31 227.75,291.69 228.65,291.07 229.55,290.46 230.45,289.85 231.35,289.23 232.25,288.62 233.15,288.01 234.06,287.41 234.96,286.80 235.86,286.19 236.76,285.59 237.66,284.99 238.56,284.39 239.46,283.79 240.36,283.19 241.26,282.60 242.16,282.01 243.07,281.41 243.97,280.82 244.87,280.23 245.77,279.65 246.67,279.06 247.57,278.47 248.47,277.89 249.37,277.31 250.27,276.73 251.17,276.15 252.08,275.58 252.98,275.00 253.88,274.43 254.78,273.86 255.68,273.29 256.58,272.72 257.48,272.16 258.38,271.59 259.28,271.03 260.18,270.47 261.09,269.91 261.99,269.35 262.89,268.79 263.79,268.24 264.69,267.69 265.59,267.14 266.49,266.59 267.39,266.04 268.29,265.50 269.19,264.95 270.10,264.41 271.00,263.87 271.90,263.33 272.80,262.80 273.70,262.26 274.60,261.73 275.50,261.20 276.40,260.67 277.30,260.14 278.20,259.62 279.11,259.09 280.01,258.57 280.91,258.05 281.81,257.53 282.71,257.02 283.61,256.50 284.51,255.99 285.41,255.48 286.31,254.97 287.21,254.47 288.12,253.96 289.02,253.46 289.92,252.96 290.82,252.46 291.72,251.96 292.62,251.47 293.52,250.97 294.42,250.48 295.32,249.99 296.22,249.51 297.13,249.02 298.03,248.54 298.93,248.06 299.83,247.58 300.73,247.10 301.63,246.62 302.53,246.15 303.43,245.68 304.33,245.21 305.23,244.74 306.14,244.28 307.04,243.81 307.94,243.35 308.84,242.89 309.74,242.44 310.64,241.98 311.54,241.53 312.44,241.08 313.34,240.63 314.24,240.18 315.15,239.73 316.05,239.29 316.95,238.85 317.85,238.41 318.75,237.97 319.65,237.54 320.55,237.10 321.45,236.67 322.35,236.24 323.25,235.82 324.16,235.39 325.06,234.97 325.96,234.55 326.86,234.13 327.76,233.71 328.66,233.30 329.56,232.89 330.46,232.48 331.36,232.07 332.26,231.66 333.17,231.26 334.07,230.85 334.97,230.45 335.87,230.06 336.77,229.66 337.67,229.27 338.57,228.88 339.47,228.49 340.37,228.10 341.27,227.71 342.18,227.33 343.08,226.95 343.98,226.57 344.88,226.19 345.78,225.82 346.68,225.44 347.58,225.07 348.48,224.70 349.38,224.34 350.28,223.97 351.19,223.61 352.09,223.25 352.99,222.89 353.89,222.54 354.79,222.18 355.69,221.83 356.59,221.48 357.49,221.13 358.39,220.79 359.29,220.44 360.20,220.10 361.10,219.76 362.00,219.42 362.90,219.09 363.80,218.75 364.70,218.42 365.60,218.09 366.50,217.77 367.40,217.44 368.30,217.12 369.21,216.80 370.11,216.48 371.01,216.16 371.91,215.85 372.81,215.54 373.71,215.23 374.61,214.92 375.51,214.61 376.41,214.31 377.31,214.01 378.22,213.71 379.12,213.41 380.02,213.11 380.92,212.82 381.82,212.53 382.72,212.24 383.62,211.95 384.52,211.67 385.42,211.38 386.32,211.10 387.23,210.82 388.13,210.54 389.03,210.27 389.93,210.00 390.83,209.73 391.73,209.46 392.63,209.19 393.53,208.93 394.43,208.66 395.33,208.40 396.24,208.14 397.14,207.89 398.04,207.63 398.94,207.38 399.84,207.13 400.74,206.88 401.64,206.63 402.54,206.39 403.44,206.15 404.34,205.91 405.25,205.67 406.15,205.43 407.05,205.20 407.95,204.97 408.85,204.74 409.75,204.51 410.65,204.28 411.55,204.06 412.45,203.84 413.35,203.62 414.26,203.40 415.16,203.18 416.06,202.97 416.96,202.76 417.86,202.55 418.76,202.34 419.66,202.13 420.56,201.93 421.46,201.73 422.36,201.53 423.27,201.33 424.17,201.13 425.07,200.94 425.97,200.75 426.87,200.56 427.77,200.37 428.67,200.18 429.57,200.00 430.47,199.82 431.37,199.64 432.28,199.46 433.18,199.28 434.08,199.11 434.98,198.94 435.88,198.77 436.78,198.60 437.68,198.43 438.58,198.27 439.48,198.11 440.38,197.95 441.29,197.79 442.19,197.63 443.09,197.48 443.99,197.33 444.89,197.18 445.79,197.03 446.69,196.88 447.59,196.74 448.49,196.60 449.39,196.46 450.30,196.32 451.20,196.18 452.10,196.05 453.00,195.91 453.90,195.78 454.80,195.65 455.70,195.53 456.60,195.40 457.50,195.28 458.40,195.16 459.31,195.04 460.21,194.92 461.11,194.81 462.01,194.70 462.91,194.58 463.81,194.48 464.71,194.37 465.61,194.26 466.51,194.16 467.41,194.06 468.32,193.96 469.22,193.86 470.12,193.77 471.02,193.67 471.92,193.58 472.82,193.49 473.72,193.41 474.62,193.32 475.52,193.24 476.42,193.16 477.33,193.08 478.23,193.00 479.13,192.92 480.03,192.85 480.93,192.78 481.83,192.71 482.73,192.64 483.63,192.57 484.53,192.51 485.43,192.45 486.34,192.39 487.24,192.33 488.14,192.27 489.04,192.22 489.94,192.17 490.84,192.12 491.74,192.07 492.64,192.02 493.54,191.98 494.44,191.94 495.35,191.90 496.25,191.86 497.15,191.82 498.05,191.79 498.95,191.76 499.85,191.73 500.75,191.70 501.65,191.67 502.55,191.65 503.45,191.63 504.36,191.61 505.26,191.59 506.16,191.57 507.06,191.56 507.96,191.55 508.86,191.54 509.76,191.53 510.66,191.52 511.56,191.52 512.46,191.51 513.37,191.51 514.27,191.52 515.17,191.52 516.07,191.53 516.97,191.53 517.87,191.54 518.77,191.56 519.67,191.57 520.57,191.59 521.47,191.60 522.38,191.62 523.28,191.65 524.18,191.67 525.08,191.70 525.98,191.73 526.88,191.76 527.78,191.79 528.68,191.82 529.58,191.86 530.48,191.90 531.39,191.94 532.29,191.98 533.19,192.03 534.09,192.07 534.99,192.12 535.89,192.17 536.79,192.23 537.69,192.28 538.59,192.34 539.49,192.40 540.40,192.46 541.30,192.52 542.20,192.59 543.10,192.66 544.00,192.73 544.90,192.80 545.80,192.87 546.70,192.95 547.60,193.03 548.50,193.11 549.41,193.19 550.31,193.28 551.21,193.36 552.11,193.45 553.01,193.54 553.91,193.64 554.81,193.73 555.71,193.83 556.61,193.93 557.51,194.03 558.42,194.14 559.32,194.24 560.22,194.35 561.12,194.46 562.02,194.57 562.92,194.69 563.82,194.80 564.72,194.92 565.62,195.05 566.52,195.17 567.43,195.29 568.33,195.42 569.23,195.55 570.13,195.68 571.03,195.82 571.93,195.96 572.83,196.09 573.73,196.24 574.63,196.38 575.53,196.52 576.44,196.67 577.34,196.82 578.24,196.97 579.14,197.13 580.04,197.28 580.94,197.44 581.84,197.60 582.74,197.77 583.64,197.93 584.54,198.10 585.45,198.27 586.35,198.44 587.25,198.62 588.15,198.79 589.05,198.97 589.95,199.15 590.85,199.34 591.75,199.52 592.65,199.71 593.55,199.90 594.46,200.09 595.36,200.28 596.26,200.48 597.16,200.68 598.06,200.88 598.96,201.09 599.86,201.29 600.76,201.50 601.66,201.71 602.56,201.92 603.47,202.14 604.37,202.35 605.27,202.57 606.17,202.79 607.07,203.02 607.97,203.24 608.87,203.47 609.77,203.70 610.67,203.94 611.57,204.17 612.48,204.41 613.38,204.65 614.28,204.89 615.18,205.14 616.08,205.38 616.98,205.63 617.88,205.88 618.78,206.14 619.68,206.39 620.58,206.65 621.49,206.91 622.39,207.17 623.29,207.44 624.19,207.70 625.09,207.97 625.99,208.25 626.89,208.52 627.79,208.80 628.69,209.07 629.59,209.35 630.50,209.64 631.40,209.92 632.30,210.21 633.20,210.50 634.10,210.79 635.00,211.09 635.90,211.38 636.80,211.68 637.70,211.98 638.60,212.29 639.51,212.59 640.41,212.90 641.31,213.21 642.21,213.52 643.11,213.84 644.01,214.16 644.91,214.48 645.81,214.80 646.71,215.12 647.61,215.45 648.52,215.78 649.42,216.11 650.32,216.44 651.22,216.78 652.12,217.11 653.02,217.45 653.92,217.79 654.82,218.14 655.72,218.49 656.62,218.83 657.53,219.18 658.43,219.54 659.33,219.89 660.23,220.25 661.13,220.61 662.03,220.97 662.93,221.34 663.83,221.70 664.73,222.07 665.63,222.44 666.54,222.82 667.44,223.19 668.34,223.57 669.24,223.95 670.14,224.33 671.04,224.71 671.94,225.10 672.84,225.49 673.74,225.88 674.64,226.27 675.55,226.67 676.45,227.06 677.35,227.46 678.25,227.86 679.15,228.27 680.05,228.67 680.95,229.08 681.85,229.49 682.75,229.90 683.65,230.32 684.56,230.73 685.46,231.15 686.36,231.57 687.26,232.00 688.16,232.42 689.06,232.85 689.96,233.28 690.86,233.71 691.76,234.14 692.66,234.58 693.57,235.01 694.47,235.45 695.37,235.89 696.27,236.34 697.17,236.78 698.07,237.23 698.97,237.68 699.87,238.13 700.77,238.59 701.67,239.04 702.58,239.50 703.48,239.96 704.38,240.42 705.28,240.88 706.18,241.35 707.08,241.82 707.98,242.29 708.88,242.76 709.78,243.23 710.68,243.71 711.59,244.19 712.49,244.67 713.39,245.15 714.29,245.63 715.19,246.12 716.09,246.60 716.99,247.09 717.89,247.58 718.79,248.08 719.69,248.57 720.60,249.07 721.50,249.57 722.40,250.07 723.30,250.57 724.20,251.07 725.10,251.58 726.00,252.09 726.90,252.60 727.80,253.11 728.70,253.62 729.61,254.14 730.51,254.65 731.41,255.17 732.31,255.69 733.21,256.22 734.11,256.74 735.01,257.27 735.91,257.79 736.81,258.32 737.71,258.85 738.62,259.39 739.52,259.92 740.42,260.46 741.32,261.00 742.22,261.54 743.12,262.08 744.02,262.62 744.92,263.17 745.82,263.71 746.72,264.26 747.63,264.81 748.53,265.36 749.43,265.92 750.33,266.47 751.23,267.03 752.13,267.59 753.03,268.15 753.93,268.71 754.83,269.27 755.73,269.83 756.64,270.40 757.54,270.97 758.44,271.54 759.34,272.11 760.24,272.68 761.14,273.25 762.04,273.83 762.94,274.41 763.84,274.98 764.74,275.56 765.65,276.15 766.55,276.73 767.45,277.31 768.35,277.90 769.25,278.49 770.15,279.08 771.05,279.67 771.95,280.26 772.85,280.85 773.75,281.45 774.66,282.04 775.56,282.64 776.46,283.24 777.36,283.84 778.26,284.44 779.16,285.04 780.06,285.65 780.96,286.25 781.86,286.86 782.76,287.47 783.67,288.08 784.57,288.69 785.47,289.30 786.37,289.91 787.27,290.53 788.17,291.15 789.07,291.76 789.97,292.38 790.87,293.00 791.77,293.62 792.68,294.25 793.58,294.87 794.48,295.49 795.38,296.12 796.28,296.75 797.18,297.38 798.08,298.01 798.98,298.64 799.88,299.27 800.78,299.90 801.69,300.54 802.59,301.17 803.49,301.81 804.39,302.45 805.29,303.09 806.19,303.73 807.09,304.37 807.99,305.01 808.89,305.66 809.79,306.30 810.70,306.95 811.60,307.59 812.50,308.24 813.40,308.89 814.30,309.54 815.20,310.19 816.10,310.84 817.00,311.50 817.90,312.15 818.80,312.81 819.71,313.46 820.61,314.12 821.51,314.78 822.41,315.44 823.31,316.10 824.21,316.76 825.11,317.42 826.01,318.08 826.91,318.75 827.81,319.41 828.72,320.08 829.62,320.74 830.52,321.41 831.42,322.08 832.32,322.75 833.22,323.42 834.12,324.09 835.02,324.76 835.92,325.44 836.82,326.11 837.73,326.79 838.63,327.46 839.53,328.14 840.43,328.82 841.33,329.49 842.23,330.17 843.13,330.85 844.03,331.53 844.93,332.21 845.83,332.90 846.74,333.58 847.64,334.26 848.54,334.95 849.44,335.63 850.34,336.32 851.24,337.01 852.14,337.69 853.04,338.38 853.94,339.07 854.84,339.76 855.75,340.45 856.65,341.14 857.55,341.83" fill="none" stroke="#6464c0" stroke-width="1.0" stroke-linejoin="round"/>
<polyline points="96.20,392.11 97.10,391.36 98.00,390.61 98.91,389.87 99.81,389.12 100.71,388.38 101.61,387.63 102.51,386.89 103.41,386.14 104.31,385.40 105.21,384.65 106.11,383.91 107.01,383.17 107.92,382.42 108.82,381.68 109.72,380.94 110.62,380.19 111.52,379.45 112.42,378.71 113.32,377.97 114.22,377.22 115.12,376.48 116.02,375.74 116.93,375.00 117.83,374.26 118.73,373.52 119.63,372.78 120.53,372.04 121.43,371.30 122.33,370.56 123.23,369.82 124.13,369.08 125.03,368.34 125.94,367.61 126.84,366.87 127.74,366.13 128.64,365.39 129.54,364.66 130.44,363.92 131.34,363.18 132.24,362.45 133.14,361.71 134.04,360.98 134.95,360.24 135.85,359.51 136.75,358.78 137.65,358.04 138.55,357.31 139.45,356.58 140.35,355.85 141.25,355.11 142.15,354.38 143.05,353.65 143.96,352.92 144.86,352.19 145.76,351.46 146.66,350.73 147.56,350.01 148.46,349.28 149.36,348.55 150.26,347.82 151.16,347.10 152.06,346.37 152.97,345.65 153.87,344.92 154.77,344.20 155.67,343.48 156.57,342.75 157.47,342.03 158.37,341.31 159.27,340.59 160.17,339.87 161.07,339.15 161.98,338.43 162.88,337.71 163.78,336.99 164.68,336.27 165.58,335.56 166.48,334.84 167.38,334.12 168.28,333.41 169.18,332.70 170.08,331.98 170.99,331.27 171.89,330.56 172.79,329.85 173.69,329.14 174.59,328.43 175.49,327.72 176.39,327.01 177.29,326.30 178.19,325.60 179.09,324.89 180.00,324.18 180.90,323.48 181.80,322.78 182.70,322.07 183.60,321.37 184.50,320.67 185.40,319.97 186.30,319.27 187.20,318.58 188.10,317.88 189.01,317.18 189.91,316.49 190.81,315.79 191.71,315.10 192.61,314.41 193.51,313.71 194.41,313.02 195.31,312.33 196.21,311.65 197.11,310.96 198.02,310.27 198.92,309.59 199.82,308.90 200.72,308.22 201.62,307.54 202.52,306.85 203.42,306.17 204.32,305.50 205.22,304.82 206.12,304.14 207.03,303.46 207.93,302.79 208.83,302.12 209.73,301.44 210.63,300.77 211.53,300.10 212.43,299.44 213.33,298.77 214.23,298.10 215.13,297.44 216.04,296.77 216.94,296.11 217.84,295.45 218.74,294.79 219.64,294.13 220.54,293.47 221.44,292.82 222.34,292.16 223.24,291.51 224.14,290.86 225.05,290.21 225.95,289.56 226.85,288.91 227.75,288.27 228.65,287.62 229.55,286.98 230.45,286.34 231.35,285.70 232.25,285.06 233.15,284.42 234.06,283.78 234.96,283.15 235.86,282.52 236.76,281.88 237.66,281.25 238.56,280.63 239.46,280.00 240.36,279.37 241.26,278.75 242.16,278.13 243.07,277.51 243.97,276.89 244.87,276.27 245.77,275.66 246.67,275.04 247.57,274.43 248.47,273.82 249.37,273.21 250.27,272.60 251.17,272.00 252.08,271.39 252.98,270.79 253.88,270.19 254.78,269.59 255.68,269.00 256.58,268.40 257.48,267.81 258.38,267.22 259.28,266.63 260.18,266.04 261.09,265.45 261.99,264.87 262.89,264.29 263.79,263.70 264.69,263.13 265.59,262.55 266.49,261.97 267.39,261.40 268.29,260.83 269.19,260.26 270.10,259.69 271.00,259.13 271.90,258.57 272.80,258.00 273.70,257.45 274.60,256.89 275.50,256.33 276.40,255.78 277.30,255.23 278.20,254.68 279.11,254.13 280.01,253.59 280.91,253.04 281.81,252.50 282.71,251.96 283.61,251.42 284.51,250.89 285.41,250.36 286.31,249.83 287.21,249.30 288.12,248.77 289.02,248.25 289.92,247.72 290.82,247.20 291.72,246.68 292.62,246.17 293.52,245.65 294.42,245.14 295.32,244.63 296.22,244.13 297.13,243.62 298.03,243.12 298.93,242.62 299.83,242.12 300.73,241.62 301.63,241.13 302.53,240.63 303.43,240.14 304.33,239.66 305.23,239.17 306.14,238.69 307.04,238.21 307.94,237.73 308.84,237.25 309.74,236.78 310.64,236.31 311.54,235.84 312.44,235.37 313.34,234.90 314.24,234.44 315.15,233.98 316.05,233.52 316.95,233.07 317.85,232.61 318.75,232.16 319.65,231.71 320.55,231.26 321.45,230.82 322.35,230.38 323.25,229.94 324.16,229.50 325.06,229.07 325.96,228.63 326.86,228.20 327.76,227.77 328.66,227.35 329.56,226.92 330.46,226.50 331.36,226.08 332.26,225.67 333.17,225.25 334.07,224.84 334.97,224.43 335.87,224.02 336.77,223.62 337.67,223.22 338.57,222.82 339.47,222.42 340.37,222.02 341.27,221.63 342.18,221.24 343.08,220.85 343.98,220.46 344.88,220.08 345.78,219.70 346.68,219.32 347.58,218.94 348.48,218.57 349.38,218.20 350.28,217.83 351.19,217.46 352.09,217.10 352.99,216.73 353.89,216.37 354.79,216.01 355.69,215.66 356.59,215.31 357.49,214.95 358.39,214.61 359.29,214.26 360.20,213.92 361.10,213.57 362.00,213.23 362.90,212.90 363.80,212.56 364.70,212.23 365.60,211.90 366.50,211.57 367.40,211.25 368.30,210.93 369.21,210.60 370.11,210.29 371.01,209.97 371.91,209.66 372.81,209.34 373.71,209.04 374.61,208.73 375.51,208.42 376.41,208.12 377.31,207.82 378.22,207.52 379.12,207.23 380.02,206.93 380.92,206.64 381.82,206.35 382.72,206.07 383.62,205.78 384.52,205.50 385.42,205.22 386.32,204.94 387.23,204.67 388.13,204.40 389.03,204.13 389.93,203.86 390.83,203.59 391.73,203.33 392.63,203.06 393.53,202.80 394.43,202.55 395.33,202.29 396.24,202.04 397.14,201.79 398.04,201.54 398.94,201.29 399.84,201.05 400.74,200.80 401.64,200.56 402.54,200.33 403.44,200.09 404.34,199.86 405.25,199.63 406.15,199.40 407.05,199.17 407.95,198.94 408.85,198.72 409.75,198.50 410.65,198.28 411.55,198.06 412.45,197.85 413.35,197.64 414.26,197.43 415.16,197.22 416.06,197.01 416.96,196.81 417.86,196.60 418.76,196.40 419.66,196.21 420.56,196.01 421.46,195.82 422.36,195.62 423.27,195.43 424.17,195.25 425.07,195.06 425.97,194.88 426.87,194.70 427.77,194.52 428.67,194.34 429.57,194.16 430.47,193.99 431.37,193.82 432.28,193.65 433.18,193.48 434.08,193.31 434.98,193.15 435.88,192.99 436.78,192.83 437.68,192.67 438.58,192.51 439.48,192.36 440.38,192.21 441.29,192.06 442.19,191.91 443.09,191.76 443.99,191.62 444.89,191.47 445.79,191.33 446.69,191.19 447.59,191.06 448.49,190.92 449.39,190.79 450.30,190.66 451.20,190.53 452.10,190.40 453.00,190.28 453.90,190.15 454.80,190.03 455.70,189.91 456.60,189.79 457.50,189.68 458.40,189.56 459.31,189.45 460.21,189.34 461.11,189.23 462.01,189.13 462.91,189.02 463.81,188.92 464.71,188.82 465.61,188.72 466.51,188.62 467.41,188.52 468.32,188.43 469.22,188.34 470.12,188.25 471.02,188.16 471.92,188.07 472.82,187.99 473.72,187.90 474.62,187.82 475.52,187.74 476.42,187.67 477.33,187.59 478.23,187.52 479.13,187.44 480.03,187.37 480.93,187.31 481.83,187.24 482.73,187.17 483.63,187.11 484.53,187.05 485.43,186.99 486.34,186.93 487.24,186.88 488.14,186.82 489.04,186.77 489.94,186.72 490.84,186.67 491.74,186.63 492.64,186.58 493.54,186.54 494.44,186.50 495.35,186.46 496.25,186.42 497.15,186.39 498.05,186.35 498.95,186.32 499.85,186.29 500.75,186.26 501.65,186.23 502.55,186.21 503.45,186.19 504.36,186.16 505.26,186.15 506.16,186.13 507.06,186.11 507.96,186.10 508.86,186.09 509.76,186.08 510.66,186.07 511.56,186.06 512.46,186.06 513.37,186.05 514.27,186.05 515.17,186.05 516.07,186.06 516.97,186.06 517.87,186.07 518.77,186.08 519.67,186.09 520.57,186.10 521.47,186.11 522.38,186.13 523.28,186.15 524.18,186.17 525.08,186.19 525.98,186.21 526.88,186.24 527.78,186.26 528.68,186.29 529.58,186.32 530.48,186.36 531.39,186.39 532.29,186.43 533.19,186.47 534.09,186.51 534.99,186.55 535.89,186.59 536.79,186.64 537.69,186.69 538.59,186.74 539.49,186.79 540.40,186.85 541.30,186.90 542.20,186.96 543.10,187.02 544.00,187.08 544.90,187.15 545.80,187.21 546.70,187.28 547.60,187.35 548.50,187.42 549.41,187.50 550.31,187.58 551.21,187.65 552.11,187.73 553.01,187.82 553.91,187.90 554.81,187.99 555.71,188.08 556.61,188.17 557.51,188.26 558.42,188.36 559.32,188.45 560.22,188.55 561.12,188.65 562.02,188.76 562.92,188.86 563.82,188.97 564.72,189.08 565.62,189.19 566.52,189.30 567.43,189.42 568.33,189.54 569.23,189.66 570.13,189.78 571.03,189.91 571.93,190.03 572.83,190.16 573.73,190.29 574.63,190.43 575.53,190.56 576.44,190.70 577.34,190.84 578.24,190.98 579.14,191.13 580.04,191.27 580.94,191.42 581.84,191.57 582.74,191.73 583.64,191.88 584.54,192.04 585.45,192.20 586.35,192.36 587.25,192.53 588.15,192.69 589.05,192.86 589.95,193.03 590.85,193.21 591.75,193.38 592.65,193.56 593.55,193.74 594.46,193.93 595.36,194.11 596.26,194.30 597.16,194.49 598.06,194.68 598.96,194.88 599.86,195.07 600.76,195.27 601.66,195.47 602.56,195.68 603.47,195.88 604.37,196.09 605.27,196.30 606.17,196.52 607.07,196.73 607.97,196.95 608.87,197.17 609.77,197.39 610.67,197.62 611.57,197.85 612.48,198.08 613.38,198.31 614.28,198.55 615.18,198.78 616.08,199.02 616.98,199.27 617.88,199.51 618.78,199.76 619.68,200.01 620.58,200.26 621.49,200.51 622.39,200.77 623.29,201.03 624.19,201.29 625.09,201.56 625.99,201.82 626.89,202.09 627.79,202.36 628.69,202.64 629.59,202.92 630.50,203.19 631.40,203.48 632.30,203.76 633.20,204.05 634.10,204.34 635.00,204.63 635.90,204.92 636.80,205.22 637.70,205.52 638.60,205.82 639.51,206.12 640.41,206.43 641.31,206.74 642.21,207.05 643.11,207.36 644.01,207.68 644.91,208.00 645.81,208.32 646.71,208.64 647.61,208.97 648.52,209.30 649.42,209.63 650.32,209.96 651.22,210.30 652.12,210.63 653.02,210.98 653.92,211.32 654.82,211.66 655.72,212.01 656.62,212.36 657.53,212.72 658.43,213.07 659.33,213.43 660.23,213.79 661.13,214.16 662.03,214.52 662.93,214.89 663.83,215.26 664.73,215.63 665.63,216.01 666.54,216.39 667.44,216.77 668.34,217.15 669.24,217.53 670.14,217.92 671.04,218.31 671.94,218.70 672.84,219.10 673.74,219.50 674.64,219.90 675.55,220.30 676.45,220.70 677.35,221.11 678.25,221.52 679.15,221.93 680.05,222.35 680.95,222.76 681.85,223.18 682.75,223.60 683.65,224.03 684.56,224.45 685.46,224.88 686.36,225.31 687.26,225.74 688.16,226.18 689.06,226.62 689.96,227.06 690.86,227.50 691.76,227.95 692.66,228.39 693.57,228.84 694.47,229.29 695.37,229.75 696.27,230.20 697.17,230.66 698.07,231.12 698.97,231.59 699.87,232.05 700.77,232.52 701.67,232.99 702.58,233.46 703.48,233.94 704.38,234.41 705.28,234.89 706.18,235.37 707.08,235.85 707.98,236.34 708.88,236.83 709.78,237.32 710.68,237.81 711.59,238.30 712.49,238.80 713.39,239.30 714.29,239.80 715.19,240.30 716.09,240.81 716.99,241.31 717.89,241.82 718.79,242.33 719.69,242.85 720.60,243.36 721.50,243.88 722.40,244.40 723.30,244.92 724.20,245.44 725.10,245.97 726.00,246.49 726.90,247.02 727.80,247.56 728.70,248.09 729.61,248.62 730.51,249.16 731.41,249.70 732.31,250.24 733.21,250.79 734.11,251.33 735.01,251.88 735.91,252.43 736.81,252.98 737.71,253.53 738.62,254.08 739.52,254.64 740.42,255.20 741.32,255.76 742.22,256.32 743.12,256.89 744.02,257.45 744.92,258.02 745.82,258.59 746.72,259.16 747.63,259.73 748.53,260.31 749.43,260.88 750.33,261.46 751.23,262.04 752.13,262.62 753.03,263.21 753.93,263.79 754.83,264.38 755.73,264.97 756.64,265.56 757.54,266.15 758.44,266.74 759.34,267.34 760.24,267.93 761.14,268.53 762.04,269.13 762.94,269.73 763.84,270.34 764.74,270.94 765.65,271.55 766.55,272.15 767.45,272.76 768.35,273.37 769.25,273.99 770.15,274.60 771.05,275.22 771.95,275.83 772.85,276.45 773.75,277.07 774.66,277.69 775.56,278.32 776.46,278.94 777.36,279.56 778.26,280.19 779.16,280.82 780.06,281.45 780.96,282.08 781.86,282.71 782.76,283.35 783.67,283.98 784.57,284.62 785.47,285.26 786.37,285.90 787.27,286.54 788.17,287.18 789.07,287.82 789.97,288.47 790.87,289.11 791.77,289.76 792.68,290.41 793.58,291.06 794.48,291.71 795.38,292.36 796.28,293.01 797.18,293.66 798.08,294.32 798.98,294.98 799.88,295.63 800.78,296.29 801.69,296.95 802.59,297.61 803.49,298.28 804.39,298.94 805.29,299.60 806.19,300.27 807.09,300.94 807.99,301.60 808.89,302.27 809.79,302.94 810.70,303.61 811.60,304.28 812.50,304.96 813.40,305.63 814.30,306.30 815.20,306.98 816.10,307.66 817.00,308.33 817.90,309.01 818.80,309.69 819.71,310.37 820.61,311.06 821.51,311.74 822.41,312.42 823.31,313.11 824.21,313.79 825.11,314.48 826.01,315.16 826.91,315.85 827.81,316.54 828.72,317.23 829.62,317.92 830.52,318.61 831.42,319.30 832.32,320.00 833.22,320.69 834.12,321.38 835.02,322.08 835.92,322.77 836.82,323.47 837.73,324.17 838.63,324.87 839.53,325.57 840.43,326.27 841.33,326.97 842.23,327.67 843.13,328.37 844.03,329.07 844.93,329.78 845.83,330.48 846.74,331.18 847.64,331.89 848.54,332.60 849.44,333.30 850.34,334.01 851.24,334.72 852.14,335.43 853.04,336.14 853.94,336.85 854.84,337.56 855.75,338.27 856.65,338.98 857.55,339.69" fill="none" stroke="#7a7ae0" stroke-width="1.4" stroke-linejoin="round"/>
<polyline points="96.20,391.89 97.10,391.13 98.00,390.38 98.91,389.63 99.81,388.88 100.71,388.13 101.61,387.38 102.51,386.62 103.41,385.87 104.31,385.12 105.21,384.37 106.11,383.62 107.01,382.87 107.92,382.12 108.82,381.37 109.72,380.62 110.62,379.87 111.52,379.11 112.42,378.36 113.32,377.61 114.22,376.86 115.12,376.11 116.02,375.36 116.93,374.61 117.83,373.86 118.73,373.11 119.63,372.36 120.53,371.61 121.43,370.86 122.33,370.11 123.23,369.36 124.13,368.62 125.03,367.87 125.94,367.12 126.84,366.37 127.74,365.62 128.64,364.87 129.54,364.12 130.44,363.37 131.34,362.63 132.24,361.88 133.14,361.13 134.04,360.38 134.95,359.64 135.85,358.89 136.75,358.14 137.65,357.39 138.55,356.65 139.45,355.90 140.35,355.16 141.25,354.41 142.15,353.66 143.05,352.92 143.96,352.17 144.86,351.43 145.76,350.68 146.66,349.94 147.56,349.19 148.46,348.45 149.36,347.71 150.26,346.96 151.16,346.22 152.06,345.48 152.97,344.73 153.87,343.99 154.77,343.25 155.67,342.51 156.57,341.76 157.47,341.02 158.37,340.28 159.27,339.54 160.17,338.80 161.07,338.06 161.98,337.32 162.88,336.58 163.78,335.84 164.68,335.11 165.58,334.37 166.48,333.63 167.38,332.89 168.28,332.16 169.18,331.42 170.08,330.68 170.99,329.95 171.89,329.21 172.79,328.48 173.69,327.74 174.59,327.01 175.49,326.28 176.39,325.55 177.29,324.81 178.19,324.08 179.09,323.35 180.00,322.62 180.90,321.89 181.80,321.16 182.70,320.43 183.60,319.70 184.50,318.98 185.40,318.25 186.30,317.52 187.20,316.80 188.10,316.07 189.01,315.35 189.91,314.62 190.81,313.90 191.71,313.18 192.61,312.46 193.51,311.73 194.41,311.01 195.31,310.29 196.21,309.58 197.11,308.86 198.02,308.14 198.92,307.42 199.82,306.71 200.72,305.99 201.62,305.28 202.52,304.56 203.42,303.85 204.32,303.14 205.22,302.43 206.12,301.72 207.03,301.01 207.93,300.30 208.83,299.60 209.73,298.89 210.63,298.19 211.53,297.48 212.43,296.78 213.33,296.08 214.23,295.37 215.13,294.67 216.04,293.98 216.94,293.28 217.84,292.58 218.74,291.89 219.64,291.19 220.54,290.50 221.44,289.81 222.34,289.11 223.24,288.42 224.14,287.74 225.05,287.05 225.95,286.36 226.85,285.68 227.75,284.99 228.65,284.31 229.55,283.63 230.45,282.95 231.35,282.27 232.25,281.59 233.15,280.92 234.06,280.24 234.96,279.57 235.86,278.90 236.76,278.23 237.66,277.56 238.56,276.89 239.46,276.23 240.36,275.56 241.26,274.90 242.16,274.24 243.07,273.58 243.97,272.92 244.87,272.26 245.77,271.61 246.67,270.96 247.57,270.30 248.47,269.65 249.37,269.01 250.27,268.36 251.17,267.71 252.08,267.07 252.98,266.43 253.88,265.79 254.78,265.15 255.68,264.52 256.58,263.88 257.48,263.25 258.38,262.62 259.28,261.99 260.18,261.36 261.09,260.74 261.99,260.12 262.89,259.50 263.79,258.88 264.69,258.26 265.59,257.64 266.49,257.03 267.39,256.42 268.29,255.81 269.19,255.20 270.10,254.60 271.00,254.00 271.90,253.39 272.80,252.80 273.70,252.20 274.60,251.60 275.50,251.01 276.40,250.42 277.30,249.83 278.20,249.25 279.11,248.67 280.01,248.08 280.91,247.51 281.81,246.93 282.71,246.35 283.61,245.78 284.51,245.21 285.41,244.65 286.31,244.08 287.21,243.52 288.12,242.96 289.02,242.40 289.92,241.84 290.82,241.29 291.72,240.74 292.62,240.19 293.52,239.65 294.42,239.10 295.32,238.56 296.22,238.02 297.13,237.49 298.03,236.95 298.93,236.42 299.83,235.90 300.73,235.37 301.63,234.85 302.53,234.33 303.43,233.81 304.33,233.29 305.23,232.78 306.14,232.27 307.04,231.76 307.94,231.26 308.84,230.76 309.74,230.26 310.64,229.76 311.54,229.27 312.44,228.77 313.34,228.28 314.24,227.80 315.15,227.32 316.05,226.83 316.95,226.36 317.85,225.88 318.75,225.41 319.65,224.94 320.55,224.47 321.45,224.01 322.35,223.55 323.25,223.09 324.16,222.63 325.06,222.18 325.96,221.73 326.86,221.28 327.76,220.84 328.66,220.39 329.56,219.96 330.46,219.52 331.36,219.09 332.26,218.66 333.17,218.23 334.07,217.80 334.97,217.38 335.87,216.96 336.77,216.54 337.67,216.13 338.57,215.72 339.47,215.31 340.37,214.91 341.27,214.50 342.18,214.11 343.08,213.71 343.98,213.31 344.88,212.92 345.78,212.54 346.68,212.15 347.58,211.77 348.48,211.39 349.38,211.01 350.28,210.64 351.19,210.27 352.09,209.90 352.99,209.53 353.89,209.17 354.79,208.81 355.69,208.45 356.59,208.10 357.49,207.75 358.39,207.40 359.29,207.06 360.20,206.71 361.10,206.37 362.00,206.04 362.90,205.70 363.80,205.37 364.70,205.04 365.60,204.71 366.50,204.39 367.40,204.07 368.30,203.75 369.21,203.44 370.11,203.13 371.01,202.82 371.91,202.51 372.81,202.21 373.71,201.90 374.61,201.61 375.51,201.31 376.41,201.02 377.31,200.73 378.22,200.44 379.12,200.15 380.02,199.87 380.92,199.59 381.82,199.31 382.72,199.04 383.62,198.77 384.52,198.50 385.42,198.23 386.32,197.97 387.23,197.71 388.13,197.45 389.03,197.19 389.93,196.94 390.83,196.69 391.73,196.44 392.63,196.19 393.53,195.95 394.43,195.71 395.33,195.47 396.24,195.23 397.14,195.00 398.04,194.77 398.94,194.54 399.84,194.31 400.74,194.09 401.64,193.87 402.54,193.65 403.44,193.43 404.34,193.22 405.25,193.00 406.15,192.80 407.05,192.59 407.95,192.38 408.85,192.18 409.75,191.98 410.65,191.78 411.55,191.59 412.45,191.39 413.35,191.20 414.26,191.01 415.16,190.83 416.06,190.64 416.96,190.46 417.86,190.28 418.76,190.10 419.66,189.93 420.56,189.75 421.46,189.58 422.36,189.41 423.27,189.24 424.17,189.08 425.07,188.92 425.97,188.76 426.87,188.60 427.77,188.44 428.67,188.28 429.57,188.13 430.47,187.98 431.37,187.83 432.28,187.69 433.18,187.54 434.08,187.40 434.98,187.26 435.88,187.12 436.78,186.98 437.68,186.85 438.58,186.71 439.48,186.58 440.38,186.45 441.29,186.32 442.19,186.20 443.09,186.08 443.99,185.95 444.89,185.83 445.79,185.71 446.69,185.60 447.59,185.48 448.49,185.37 449.39,185.26 450.30,185.15 451.20,185.04 452.10,184.94 453.00,184.83 453.90,184.73 454.80,184.63 455.70,184.53 456.60,184.43 457.50,184.33 458.40,184.24 459.31,184.15 460.21,184.06 461.11,183.97 462.01,183.88 462.91,183.79 463.81,183.71 464.71,183.63 465.61,183.55 466.51,183.47 467.41,183.39 468.32,183.31 469.22,183.24 470.12,183.16 471.02,183.09 471.92,183.02 472.82,182.95 473.72,182.88 474.62,182.82 475.52,182.75 476.42,182.69 477.33,182.63 478.23,182.57 479.13,182.51 480.03,182.45 480.93,182.40 481.83,182.34 482.73,182.29 483.63,182.24 484.53,182.19 485.43,182.14 486.34,182.10 487.24,182.05 488.14,182.01 489.04,181.96 489.94,181.92 490.84,181.88 491.74,181.85 492.64,181.81 493.54,181.77 494.44,181.74 495.35,181.71 496.25,181.68 497.15,181.65 498.05,181.62 498.95,181.59 499.85,181.56 500.75,181.54 501.65,181.52 502.55,181.50 503.45,181.48 504.36,181.46 505.26,181.44 506.16,181.43 507.06,181.41 507.96,181.40 508.86,181.39 509.76,181.38 510.66,181.37 511.56,181.36 512.46,181.36 513.37,181.35 514.27,181.35 515.17,181.35 516.07,181.35 516.97,181.35 517.87,181.35 518.77,181.36 519.67,181.36 520.57,181.37 521.47,181.38 522.38,181.39 523.28,181.40 524.18,181.41 525.08,181.43 525.98,181.44 526.88,181.46 527.78,181.48 528.68,181.50 529.58,181.52 530.48,181.55 531.39,181.57 532.29,181.60 533.19,181.63 534.09,181.66 534.99,181.69 535.89,181.72 536.79,181.76 537.69,181.79 538.59,181.83 539.49,181.87 540.40,181.91 541.30,181.95 542.20,182.00 543.10,182.04 544.00,182.09 544.90,182.14 545.80,182.19 546.70,182.24 547.60,182.30 548.50,182.36 549.41,182.41 550.31,182.47 551.21,182.53 552.11,182.60 553.01,182.66 553.91,182.73 554.81,182.80 555.71,182.87 556.61,182.94 557.51,183.01 558.42,183.09 559.32,183.16 560.22,183.24 561.12,183.32 562.02,183.41 562.92,183.49 563.82,183.58 564.72,183.67 565.62,183.76 566.52,183.85 567.43,183.95 568.33,184.04 569.23,184.14 570.13,184.24 571.03,184.34 571.93,184.45 572.83,184.55 573.73,184.66 574.63,184.77 575.53,184.89 576.44,185.00 577.34,185.12 578.24,185.24 579.14,185.36 580.04,185.48 580.94,185.61 581.84,185.74 582.74,185.87 583.64,186.00 584.54,186.13 585.45,186.27 586.35,186.41 587.25,186.55 588.15,186.69 589.05,186.84 589.95,186.99 590.85,187.14 591.75,187.29 592.65,187.44 593.55,187.60 594.46,187.76 595.36,187.92 596.26,188.09 597.16,188.25 598.06,188.42 598.96,188.59 599.86,188.77 600.76,188.94 601.66,189.12 602.56,189.30 603.47,189.49 604.37,189.68 605.27,189.86 606.17,190.06 607.07,190.25 607.97,190.45 608.87,190.65 609.77,190.85 610.67,191.05 611.57,191.26 612.48,191.47 613.38,191.68 614.28,191.90 615.18,192.11 616.08,192.33 616.98,192.56 617.88,192.78 618.78,193.01 619.68,193.24 620.58,193.47 621.49,193.71 622.39,193.95 623.29,194.19 624.19,194.44 625.09,194.68 625.99,194.93 626.89,195.19 627.79,195.44 628.69,195.70 629.59,195.96 630.50,196.22 631.40,196.49 632.30,196.76 633.20,197.03 634.10,197.31 635.00,197.59 635.90,197.87 636.80,198.15 637.70,198.44 638.60,198.73 639.51,199.02 640.41,199.31 641.31,199.61 642.21,199.91 643.11,200.22 644.01,200.52 644.91,200.83 645.81,201.15 646.71,201.46 647.61,201.78 648.52,202.10 649.42,202.43 650.32,202.75 651.22,203.08 652.12,203.42 653.02,203.75 653.92,204.09 654.82,204.43 655.72,204.78 656.62,205.12 657.53,205.47 658.43,205.83 659.33,206.18 660.23,206.54 661.13,206.90 662.03,207.27 662.93,207.64 663.83,208.01 664.73,208.38 665.63,208.76 666.54,209.14 667.44,209.52 668.34,209.91 669.24,210.29 670.14,210.68 671.04,211.08 671.94,211.48 672.84,211.88 673.74,212.28 674.64,212.68 675.55,213.09 676.45,213.50 677.35,213.92 678.25,214.33 679.15,214.75 680.05,215.18 680.95,215.60 681.85,216.03 682.75,216.46 683.65,216.90 684.56,217.33 685.46,217.77 686.36,218.22 687.26,218.66 688.16,219.11 689.06,219.56 689.96,220.01 690.86,220.47 691.76,220.93 692.66,221.39 693.57,221.86 694.47,222.32 695.37,222.79 696.27,223.27 697.17,223.74 698.07,224.22 698.97,224.70 699.87,225.19 700.77,225.67 701.67,226.16 702.58,226.65 703.48,227.15 704.38,227.64 705.28,228.14 706.18,228.64 707.08,229.15 707.98,229.66 708.88,230.17 709.78,230.68 710.68,231.19 711.59,231.71 712.49,232.23 713.39,232.75 714.29,233.28 715.19,233.80 716.09,234.33 716.99,234.87 717.89,235.40 718.79,235.94 719.69,236.48 720.60,237.02 721.50,237.56 722.40,238.11 723.30,238.66 724.20,239.21 725.10,239.76 726.00,240.32 726.90,240.88 727.80,241.44 728.70,242.00 729.61,242.56 730.51,243.13 731.41,243.70 732.31,244.27 733.21,244.85 734.11,245.42 735.01,246.00 735.91,246.58 736.81,247.16 737.71,247.74 738.62,248.33 739.52,248.92 740.42,249.51 741.32,250.10 742.22,250.70 743.12,251.29 744.02,251.89 744.92,252.49 745.82,253.09 746.72,253.70 747.63,254.31 748.53,254.91 749.43,255.52 750.33,256.14 751.23,256.75 752.13,257.36 753.03,257.98 753.93,258.60 754.83,259.22 755.73,259.85 756.64,260.47 757.54,261.10 758.44,261.72 759.34,262.35 760.24,262.99 761.14,263.62 762.04,264.25 762.94,264.89 763.84,265.53 764.74,266.17 765.65,266.81 766.55,267.45 767.45,268.10 768.35,268.74 769.25,269.39 770.15,270.04 771.05,270.69 771.95,271.34 772.85,272.00 773.75,272.65 774.66,273.31 775.56,273.97 776.46,274.62 777.36,275.29 778.26,275.95 779.16,276.61 780.06,277.28 780.96,277.94 781.86,278.61 782.76,279.28 783.67,279.95 784.57,280.62 785.47,281.29 786.37,281.97 787.27,282.64 788.17,283.32 789.07,283.99 789.97,284.67 790.87,285.35 791.77,286.03 792.68,286.72 793.58,287.40 794.48,288.08 795.38,288.77 796.28,289.46 797.18,290.14 798.08,290.83 798.98,291.52 799.88,292.21 800.78,292.91 801.69,293.60 802.59,294.29 803.49,294.99 804.39,295.68 805.29,296.38 806.19,297.08 807.09,297.78 807.99,298.48 808.89,299.18 809.79,299.88 810.70,300.58 811.60,301.28 812.50,301.99 813.40,302.69 814.30,303.40 815.20,304.11 816.10,304.81 817.00,305.52 817.90,306.23 818.80,306.94 819.71,307.65 820.61,308.36 821.51,309.07 822.41,309.79 823.31,310.50 824.21,311.22 825.11,311.93 826.01,312.65 826.91,313.36 827.81,314.08 828.72,314.80 829.62,315.51 830.52,316.23 831.42,316.95 832.32,317.67 833.22,318.39 834.12,319.12 835.02,319.84 835.92,320.56 836.82,321.28 837.73,322.01 838.63,322.73 839.53,323.46 840.43,324.18 841.33,324.91 842.23,325.63 843.13,326.36 844.03,327.09 844.93,327.82 845.83,328.55 846.74,329.27 847.64,330.00 848.54,330.73 849.44,331.46 850.34,332.19 851.24,332.93 852.14,333.66 853.04,334.39 853.94,335.12 854.84,335.86 855.75,336.59 856.65,337.32 857.55,338.06" fill="none" stroke="#8888f0" stroke-width="1.9" stroke-linejoin="round"/>
<polyline points="96.20,391.85 97.10,391.10 98.00,390.34 98.91,389.59 99.81,388.84 100.71,388.08 101.61,387.33 102.51,386.58 103.41,385.82 104.31,385.07 105.21,384.32 106.11,383.56 107.01,382.81 107.92,382.06 108.82,381.30 109.72,380.55 110.62,379.80 111.52,379.04 112.42,378.29 113.32,377.54 114.22,376.78 115.12,376.03 116.02,375.28 116.93,374.52 117.83,373.77 118.73,373.02 119.63,372.26 120.53,371.51 121.43,370.76 122.33,370.01 123.23,369.25 124.13,368.50 125.03,367.75 125.94,366.99 126.84,366.24 127.74,365.49 128.64,364.73 129.54,363.98 130.44,363.23 131.34,362.47 132.24,361.72 133.14,360.97 134.04,360.21 134.95,359.46 135.85,358.71 136.75,357.96 137.65,357.20 138.55,356.45 139.45,355.70 140.35,354.94 141.25,354.19 142.15,353.44 143.05,352.68 143.96,351.93 144.86,351.18 145.76,350.43 146.66,349.67 147.56,348.92 148.46,348.17 149.36,347.41 150.26,346.66 151.16,345.91 152.06,345.16 152.97,344.40 153.87,343.65 154.77,342.90 155.67,342.15 156.57,341.39 157.47,340.64 158.37,339.89 159.27,339.14 160.17,338.38 161.07,337.63 161.98,336.88 162.88,336.13 163.78,335.38 164.68,334.62 165.58,333.87 166.48,333.12 167.38,332.37 168.28,331.62 169.18,330.86 170.08,330.11 170.99,329.36 171.89,328.61 172.79,327.86 173.69,327.11 174.59,326.36 175.49,325.60 176.39,324.85 177.29,324.10 178.19,323.35 179.09,322.60 180.00,321.85 180.90,321.10 181.80,320.35 182.70,319.60 183.60,318.85 184.50,318.10 185.40,317.35 186.30,316.60 187.20,315.85 188.10,315.10 189.01,314.35 189.91,313.61 190.81,312.86 191.71,312.11 192.61,311.36 193.51,310.61 194.41,309.86 195.31,309.12 196.21,308.37 197.11,307.62 198.02,306.88 198.92,306.13 199.82,305.38 200.72,304.64 201.62,303.89 202.52,303.15 203.42,302.40 204.32,301.66 205.22,300.91 206.12,300.17 207.03,299.42 207.93,298.68 208.83,297.94 209.73,297.20 210.63,296.45 211.53,295.71 212.43,294.97 213.33,294.23 214.23,293.49 215.13,292.75 216.04,292.01 216.94,291.27 217.84,290.53 218.74,289.80 219.64,289.06 220.54,288.32 221.44,287.58 222.34,286.85 223.24,286.11 224.14,285.38 225.05,284.65 225.95,283.91 226.85,283.18 227.75,282.45 228.65,281.72 229.55,280.99 230.45,280.26 231.35,279.53 232.25,278.80 233.15,278.08 234.06,277.35 234.96,276.63 235.86,275.90 236.76,275.18 237.66,274.46 238.56,273.73 239.46,273.01 240.36,272.29 241.26,271.58 242.16,270.86 243.07,270.14 243.97,269.43 244.87,268.71 245.77,268.00 246.67,267.29 247.57,266.58 248.47,265.87 249.37,265.16 250.27,264.45 251.17,263.75 252.08,263.04 252.98,262.34 253.88,261.64 254.78,260.94 255.68,260.24 256.58,259.55 257.48,258.85 258.38,258.16 259.28,257.47 260.18,256.77 261.09,256.09 261.99,255.40 262.89,254.71 263.79,254.03 264.69,253.35 265.59,252.67 266.49,251.99 267.39,251.31 268.29,250.64 269.19,249.97 270.10,249.30 271.00,248.63 271.90,247.96 272.80,247.30 273.70,246.63 274.60,245.97 275.50,245.32 276.40,244.66 277.30,244.01 278.20,243.35 279.11,242.71 280.01,242.06 280.91,241.41 281.81,240.77 282.71,240.13 283.61,239.50 284.51,238.86 285.41,238.23 286.31,237.60 287.21,236.97 288.12,236.35 289.02,235.73 289.92,235.11 290.82,234.49 291.72,233.88 292.62,233.27 293.52,232.66 294.42,232.06 295.32,231.46 296.22,230.86 297.13,230.26 298.03,229.67 298.93,229.08 299.83,228.49 300.73,227.91 301.63,227.33 302.53,226.75 303.43,226.18 304.33,225.61 305.23,225.04 306.14,224.48 307.04,223.91 307.94,223.36 308.84,222.80 309.74,222.25 310.64,221.70 311.54,221.16 312.44,220.62 313.34,220.08 314.24,219.55 315.15,219.02 316.05,218.49 316.95,217.97 317.85,217.45 318.75,216.93 319.65,216.42 320.55,215.91 321.45,215.41 322.35,214.91 323.25,214.41 324.16,213.92 325.06,213.43 325.96,212.94 326.86,212.46 327.76,211.98 328.66,211.51 329.56,211.04 330.46,210.57 331.36,210.11 332.26,209.65 333.17,209.19 334.07,208.74 334.97,208.30 335.87,207.85 336.77,207.41 337.67,206.98 338.57,206.55 339.47,206.12 340.37,205.70 341.27,205.28 342.18,204.86 343.08,204.45 343.98,204.04 344.88,203.64 345.78,203.24 346.68,202.85 347.58,202.45 348.48,202.07 349.38,201.68 350.28,201.30 351.19,200.93 352.09,200.56 352.99,200.19 353.89,199.83 354.79,199.47 355.69,199.11 356.59,198.76 357.49,198.41 358.39,198.07 359.29,197.73 360.20,197.40 361.10,197.06 362.00,196.74 362.90,196.41 363.80,196.09 364.70,195.78 365.60,195.47 366.50,195.16 367.40,194.85 368.30,194.55 369.21,194.26 370.11,193.96 371.01,193.68 371.91,193.39 372.81,193.11 373.71,192.83 374.61,192.56 375.51,192.29 376.41,192.02 377.31,191.76 378.22,191.50 379.12,191.24 380.02,190.99 380.92,190.74 381.82,190.50 382.72,190.26 383.62,190.02 384.52,189.78 385.42,189.55 386.32,189.33 387.23,189.10 388.13,188.88 389.03,188.66 389.93,188.45 390.83,188.24 391.73,188.03 392.63,187.83 393.53,187.63 394.43,187.43 395.33,187.24 396.24,187.04 397.14,186.86 398.04,186.67 398.94,186.49 399.84,186.31 400.74,186.13 401.64,185.96 402.54,185.79 403.44,185.62 404.34,185.46 405.25,185.30 406.15,185.14 407.05,184.98 407.95,184.83 408.85,184.68 409.75,184.53 410.65,184.39 411.55,184.24 412.45,184.10 413.35,183.97 414.26,183.83 415.16,183.70 416.06,183.57 416.96,183.44 417.86,183.32 418.76,183.20 419.66,183.08 420.56,182.96 421.46,182.84 422.36,182.73 423.27,182.62 424.17,182.51 425.07,182.40 425.97,182.30 426.87,182.20 427.77,182.10 428.67,182.00 429.57,181.90 430.47,181.81 431.37,181.71 432.28,181.62 433.18,181.54 434.08,181.45 434.98,181.36 435.88,181.28 436.78,181.20 437.68,181.12 438.58,181.04 439.48,180.97 440.38,180.89 441.29,180.82 442.19,180.75 443.09,180.68 443.99,180.61 444.89,180.55 445.79,180.48 446.69,180.42 447.59,180.36 448.49,180.30 449.39,180.24 450.30,180.18 451.20,180.12 452.10,180.07 453.00,180.01 453.90,179.96 454.80,179.91 455.70,179.86 456.60,179.81 457.50,179.77 458.40,179.72 459.31,179.67 460.21,179.63 461.11,179.59 462.01,179.55 462.91,179.50 463.81,179.47 464.71,179.43 465.61,179.39 466.51,179.35 467.41,179.32 468.32,179.28 469.22,179.25 470.12,179.22 471.02,179.18 471.92,179.15 472.82,179.12 473.72,179.09 474.62,179.06 475.52,179.04 476.42,179.01 477.33,178.98 478.23,178.96 479.13,178.93 480.03,178.91 480.93,178.89 481.83,178.87 482.73,178.84 483.63,178.82 484.53,178.80 485.43,178.78 486.34,178.76 487.24,178.75 488.14,178.73 489.04,178.71 489.94,178.70 490.84,178.68 491.74,178.66 492.64,178.65 493.54,178.64 494.44,178.62 495.35,178.61 496.25,178.60 497.15,178.59 498.05,178.57 498.95,178.56 499.85,178.55 500.75,178.54 501.65,178.54 502.55,178.53 503.45,178.52 504.36,178.51 505.26,178.51 506.16,178.50 507.06,178.49 507.96,178.49 508.86,178.48 509.76,178.48 510.66,178.48 511.56,178.47 512.46,178.47 513.37,178.47 514.27,178.46 515.17,178.46 516.07,178.46 516.97,178.46 517.87,178.46 518.77,178.46 519.67,178.47 520.57,178.47 521.47,178.47 522.38,178.47 523.28,178.48 524.18,178.48 525.08,178.48 525.98,178.49 526.88,178.50 527.78,178.50 528.68,178.51 529.58,178.52 530.48,178.52 531.39,178.53 532.29,178.54 533.19,178.55 534.09,178.56 534.99,178.57 535.89,178.59 536.79,178.60 537.69,178.61 538.59,178.63 539.49,178.64 540.40,178.66 541.30,178.67 542.20,178.69 543.10,178.71 544.00,178.73 544.90,178.74 545.80,178.76 546.70,178.79 547.60,178.81 548.50,178.83 549.41,178.85 550.31,178.88 551.21,178.90 552.11,178.93 553.01,178.96 553.91,178.99 554.81,179.02 555.71,179.05 556.61,179.08 557.51,179.11 558.42,179.14 559.32,179.18 560.22,179.21 561.12,179.25 562.02,179.29 562.92,179.33 563.82,179.37 564.72,179.41 565.62,179.46 566.52,179.50 567.43,179.55 568.33,179.59 569.23,179.64 570.13,179.69 571.03,179.74 571.93,179.80 572.83,179.85 573.73,179.91 574.63,179.97 575.53,180.03 576.44,180.09 577.34,180.15 578.24,180.21 579.14,180.28 580.04,180.35 580.94,180.42 581.84,180.49 582.74,180.56 583.64,180.64 584.54,180.72 585.45,180.80 586.35,180.88 587.25,180.96 588.15,181.05 589.05,181.13 589.95,181.22 590.85,181.31 591.75,181.41 592.65,181.50 593.55,181.60 594.46,181.70 595.36,181.81 596.26,181.91 597.16,182.02 598.06,182.13 598.96,182.24 599.86,182.36 600.76,182.47 601.66,182.60 602.56,182.72 603.47,182.84 604.37,182.97 605.27,183.10 606.17,183.24 607.07,183.37 607.97,183.51 608.87,183.65 609.77,183.80 610.67,183.95 611.57,184.10 612.48,184.25 613.38,184.41 614.28,184.57 615.18,184.73 616.08,184.90 616.98,185.07 617.88,185.24 618.78,185.41 619.68,185.59 620.58,185.77 621.49,185.96 622.39,186.15 623.29,186.34 624.19,186.53 625.09,186.73 625.99,186.94 626.89,187.14 627.79,187.35 628.69,187.56 629.59,187.78 630.50,188.00 631.40,188.22 632.30,188.45 633.20,188.68 634.10,188.91 635.00,189.15 635.90,189.39 636.80,189.64 637.70,189.89 638.60,190.14 639.51,190.40 640.41,190.66 641.31,190.92 642.21,191.19 643.11,191.46 644.01,191.74 644.91,192.02 645.81,192.30 646.71,192.59 647.61,192.88 648.52,193.18 649.42,193.48 650.32,193.78 651.22,194.09 652.12,194.40 653.02,194.72 653.92,195.04 654.82,195.36 655.72,195.69 656.62,196.02 657.53,196.36 658.43,196.70 659.33,197.04 660.23,197.39 661.13,197.74 662.03,198.10 662.93,198.46 663.83,198.82 664.73,199.19 665.63,199.56 666.54,199.94 667.44,200.32 668.34,200.71 669.24,201.09 670.14,201.49 671.04,201.88 671.94,202.29 672.84,202.69 673.74,203.10 674.64,203.51 675.55,203.93 676.45,204.35 677.35,204.78 678.25,205.21 679.15,205.64 680.05,206.08 680.95,206.52 681.85,206.96 682.75,207.41 683.65,207.87 684.56,208.32 685.46,208.79 686.36,209.25 687.26,209.72 688.16,210.19 689.06,210.67 689.96,211.15 690.86,211.63 691.76,212.12 692.66,212.61 693.57,213.11 694.47,213.60 695.37,214.11 696.27,214.61 697.17,215.12 698.07,215.64 698.97,216.15 699.87,216.67 700.77,217.20 701.67,217.73 702.58,218.26 703.48,218.79 704.38,219.33 705.28,219.87 706.18,220.41 707.08,220.96 707.98,221.51 708.88,222.07 709.78,222.63 710.68,223.19 711.59,223.75 712.49,224.32 713.39,224.89 714.29,225.46 715.19,226.04 716.09,226.62 716.99,227.20 717.89,227.79 718.79,228.38 719.69,228.97 720.60,229.56 721.50,230.16 722.40,230.76 723.30,231.37 724.20,231.97 725.10,232.58 726.00,233.19 726.90,233.80 727.80,234.42 728.70,235.04 729.61,235.66 730.51,236.29 731.41,236.91 732.31,237.54 733.21,238.17 734.11,238.81 735.01,239.44 735.91,240.08 736.81,240.72 737.71,241.37 738.62,242.01 739.52,242.66 740.42,243.31 741.32,243.96 742.22,244.62 743.12,245.27 744.02,245.93 744.92,246.59 745.82,247.25 746.72,247.92 747.63,248.59 748.53,249.25 749.43,249.92 750.33,250.60 751.23,251.27 752.13,251.94 753.03,252.62 753.93,253.30 754.83,253.98 755.73,254.66 756.64,255.35 757.54,256.03 758.44,256.72 759.34,257.41 760.24,258.10 761.14,258.79 762.04,259.48 762.94,260.18 763.84,260.87 764.74,261.57 765.65,262.27 766.55,262.97 767.45,263.67 768.35,264.37 769.25,265.08 770.15,265.78 771.05,266.49 771.95,267.20 772.85,267.90 773.75,268.61 774.66,269.32 775.56,270.04 776.46,270.75 777.36,271.46 778.26,272.18 779.16,272.89 780.06,273.61 780.96,274.33 781.86,275.05 782.76,275.77 783.67,276.49 784.57,277.21 785.47,277.93 786.37,278.66 787.27,279.38 788.17,280.10 789.07,280.83 789.97,281.56 790.87,282.28 791.77,283.01 792.68,283.74 793.58,284.47 794.48,285.20 795.38,285.93 796.28,286.66 797.18,287.39 798.08,288.13 798.98,288.86 799.88,289.59 800.78,290.33 801.69,291.06 802.59,291.80 803.49,292.53 804.39,293.27 805.29,294.01 806.19,294.74 807.09,295.48 807.99,296.22 808.89,296.96 809.79,297.70 810.70,298.44 811.60,299.18 812.50,299.92 813.40,300.66 814.30,301.40 815.20,302.14 816.10,302.88 817.00,303.63 817.90,304.37 818.80,305.11 819.71,305.86 820.61,306.60 821.51,307.34 822.41,308.09 823.31,308.83 824.21,309.58 825.11,310.32 826.01,311.07 826.91,311.81 827.81,312.56 828.72,313.31 829.62,314.05 830.52,314.80 831.42,315.55 832.32,316.29 833.22,317.04 834.12,317.79 835.02,318.54 835.92,319.28 836.82,320.03 837.73,320.78 838.63,321.53 839.53,322.28 840.43,323.02 841.33,323.77 842.23,324.52 843.13,325.27 844.03,326.02 844.93,326.77 845.83,327.52 846.74,328.27 847.64,329.02 848.54,329.77 849.44,330.52 850.34,331.27 851.24,332.02 852.14,332.77 853.04,333.52 853.94,334.27 854.84,335.02 855.75,335.77 856.65,336.52 857.55,337.28" fill="none" stroke="#9090f8" stroke-width="2.4" stroke-linejoin="round"/>
<polyline points="96.20,391.85 97.10,391.10 98.00,390.34 98.91,389.59 99.81,388.84 100.71,388.08 101.61,387.33 102.51,386.58 103.41,385.82 104.31,385.07 105.21,384.32 106.11,383.56 107.01,382.81 107.92,382.06 108.82,381.30 109.72,380.55 110.62,379.80 111.52,379.04 112.42,378.29 113.32,377.54 114.22,376.78 115.12,376.03 116.02,375.28 116.93,374.52 117.83,373.77 118.73,373.02 119.63,372.26 120.53,371.51 121.43,370.76 122.33,370.00 123.23,369.25 124.13,368.50 125.03,367.74 125.94,366.99 126.84,366.24 127.74,365.48 128.64,364.73 129.54,363.98 130.44,363.22 131.34,362.47 132.24,361.72 133.14,360.96 134.04,360.21 134.95,359.46 135.85,358.70 136.75,357.95 137.65,357.20 138.55,356.44 139.45,355.69 140.35,354.94 141.25,354.18 142.15,353.43 143.05,352.68 143.96,351.92 144.86,351.17 145.76,350.42 146.66,349.66 147.56,348.91 148.46,348.16 149.36,347.40 150.26,346.65 151.16,345.90 152.06,345.14 152.97,344.39 153.87,343.64 154.77,342.89 155.67,342.13 156.57,341.38 157.47,340.63 158.37,339.87 159.27,339.12 160.17,338.37 161.07,337.61 161.98,336.86 162.88,336.11 163.78,335.35 164.68,334.60 165.58,333.85 166.48,333.09 167.38,332.34 168.28,331.59 169.18,330.83 170.08,330.08 170.99,329.33 171.89,328.57 172.79,327.82 173.69,327.07 174.59,326.31 175.49,325.56 176.39,324.81 177.29,324.05 178.19,323.30 179.09,322.55 180.00,321.79 180.90,321.04 181.80,320.29 182.70,319.53 183.60,318.78 184.50,318.03 185.40,317.27 186.30,316.52 187.20,315.77 188.10,315.01 189.01,314.26 189.91,313.51 190.81,312.75 191.71,312.00 192.61,311.25 193.51,310.49 194.41,309.74 195.31,308.99 196.21,308.23 197.11,307.48 198.02,306.73 198.92,305.97 199.82,305.22 200.72,304.47 201.62,303.71 202.52,302.96 203.42,302.21 204.32,301.45 205.22,300.70 206.12,299.95 207.03,299.19 207.93,298.44 208.83,297.69 209.73,296.93 210.63,296.18 211.53,295.43 212.43,294.67 213.33,293.92 214.23,293.17 215.13,292.41 216.04,291.66 216.94,290.91 217.84,290.15 218.74,289.40 219.64,288.65 220.54,287.89 221.44,287.14 222.34,286.39 223.24,285.63 224.14,284.88 225.05,284.13 225.95,283.38 226.85,282.62 227.75,281.87 228.65,281.12 229.55,280.36 230.45,279.61 231.35,278.86 232.25,278.10 233.15,277.35 234.06,276.60 234.96,275.84 235.86,275.09 236.76,274.34 237.66,273.58 238.56,272.83 239.46,272.08 240.36,271.32 241.26,270.57 242.16,269.82 243.07,269.06 243.97,268.31 244.87,267.56 245.77,266.80 246.67,266.05 247.57,265.30 248.47,264.54 249.37,263.79 250.27,263.04 251.17,262.28 252.08,261.53 252.98,260.78 253.88,260.02 254.78,259.27 255.68,258.52 256.58,257.76 257.48,257.01 258.38,256.26 259.28,255.50 260.18,254.75 261.09,254.00 261.99,253.24 262.89,252.49 263.79,251.74 264.69,250.98 265.59,250.23 266.49,249.48 267.39,248.72 268.29,247.97 269.19,247.22 270.10,246.46 271.00,245.71 271.90,244.96 272.80,244.20 273.70,243.45 274.60,242.70 275.50,241.94 276.40,241.19 277.30,240.44 278.20,239.68 279.11,238.93 280.01,238.18 280.91,237.42 281.81,236.67 282.71,235.92 283.61,235.16 284.51,234.41 285.41,233.66 286.31,232.90 287.21,232.15 288.12,231.40 289.02,230.64 289.92,229.89 290.82,229.14 291.72,228.38 292.62,227.63 293.52,226.88 294.42,226.12 295.32,225.37 296.22,224.62 297.13,223.87 298.03,223.11 298.93,222.36 299.83,221.61 300.73,220.85 301.63,220.10 302.53,219.35 303.43,218.59 304.33,217.84 305.23,217.09 306.14,216.33 307.04,215.58 307.94,214.83 308.84,214.07 309.74,213.32 310.64,212.57 311.54,211.81 312.44,211.06 313.34,210.31 314.24,209.55 315.15,208.80 316.05,208.05 316.95,207.29 317.85,206.54 318.75,205.79 319.65,205.03 320.55,204.28 321.45,203.53 322.35,202.77 323.25,202.02 324.16,201.27 325.06,200.51 325.96,199.76 326.86,199.01 327.76,198.25 328.66,197.50 329.56,196.75 330.46,195.99 331.36,195.24 332.26,194.49 333.17,193.73 334.07,192.98 334.97,192.23 335.87,191.47 336.77,190.72 337.67,189.97 338.57,189.21 339.47,188.46 340.37,187.71 341.27,186.95 342.18,186.20 343.08,185.45 343.98,184.69 344.88,183.94 345.78,183.19 346.68,182.43 347.58,181.68 348.48,180.93 349.38,180.17 350.28,179.42 351.19,178.67 352.09,178.10 352.99,178.10 353.89,178.10 354.79,178.10 355.69,178.10 356.59,178.10 357.49,178.10 358.39,178.10 359.29,178.10 360.20,178.10 361.10,178.10 362.00,178.10 362.90,178.10 363.80,178.10 364.70,178.10 365.60,178.10 366.50,178.10 367.40,178.10 368.30,178.10 369.21,178.10 370.11,178.10 371.01,178.10 371.91,178.10 372.81,178.10 373.71,178.10 374.61,178.10 375.51,178.10 376.41,178.10 377.31,178.10 378.22,178.10 379.12,178.10 380.02,178.10 380.92,178.10 381.82,178.10 382.72,178.10 383.62,178.10 384.52,178.10 385.42,178.10 386.32,178.10 387.23,178.10 388.13,178.10 389.03,178.10 389.93,178.10 390.83,178.10 391.73,178.10 392.63,178.10 393.53,178.10 394.43,178.10 395.33,178.10 396.24,178.10 397.14,178.10 398.04,178.10 398.94,178.10 399.84,178.10 400.74,178.10 401.64,178.10 402.54,178.10 403.44,178.10 404.34,178.10 405.25,178.10 406.15,178.10 407.05,178.10 407.95,178.10 408.85,178.10 409.75,178.10 410.65,178.10 411.55,178.10 412.45,178.10 413.35,178.10 414.26,178.10 415.16,178.10 416.06,178.10 416.96,178.10 417.86,178.10 418.76,178.10 419.66,178.10 420.56,178.10 421.46,178.10 422.36,178.10 423.27,178.10 424.17,178.10 425.07,178.10 425.97,178.10 426.87,178.10 427.77,178.10 428.67,178.10 429.57,178.10 430.47,178.10 431.37,178.10 432.28,178.10 433.18,178.10 434.08,178.10 434.98,178.10 435.88,178.10 436.78,178.10 437.68,178.10 438.58,178.10 439.48,178.10 440.38,178.10 441.29,178.10 442.19,178.10 443.09,178.10 443.99,178.10 444.89,178.10 445.79,178.10 446.69,178.10 447.59,178.10 448.49,178.10 449.39,178.10 450.30,178.10 451.20,178.10 452.10,178.10 453.00,178.10 453.90,178.10 454.80,178.10 455.70,178.10 456.60,178.10 457.50,178.10 458.40,178.10 459.31,178.10 460.21,178.10 461.11,178.10 462.01,178.10 462.91,178.10 463.81,178.10 464.71,178.10 465.61,178.10 466.51,178.10 467.41,178.10 468.32,178.10 469.22,178.10 470.12,178.10 471.02,178.10 471.92,178.10 472.82,178.10 473.72,178.10 474.62,178.10 475.52,178.10 476.42,178.10 477.33,178.10 478.23,178.10 479.13,178.10 480.03,178.10 480.93,178.10 481.83,178.10 482.73,178.10 483.63,178.10 484.53,178.10 485.43,178.10 486.34,178.10 487.24,178.10 488.14,178.10 489.04,178.10 489.94,178.10 490.84,178.10 491.74,178.10 492.64,178.10 493.54,178.10 494.44,178.10 495.35,178.10 496.25,178.10 497.15,178.10 498.05,178.10 498.95,178.10 499.85,178.10 500.75,178.10 501.65,178.10 502.55,178.10 503.45,178.10 504.36,178.10 505.26,178.10 506.16,178.10 507.06,178.10 507.96,178.10 508.86,178.10 509.76,178.10 510.66,178.10 511.56,178.10 512.46,178.10 513.37,178.10 514.27,178.10 515.17,178.10 516.07,178.10 516.97,178.10 517.87,178.10 518.77,178.10 519.67,178.10 520.57,178.10 521.47,178.10 522.38,178.10 523.28,178.10 524.18,178.10 525.08,178.10 525.98,178.10 526.88,178.10 527.78,178.10 528.68,178.10 529.58,178.10 530.48,178.10 531.39,178.10 532.29,178.10 533.19,178.10 534.09,178.10 534.99,178.10 535.89,178.10 536.79,178.10 537.69,178.10 538.59,178.10 539.49,178.10 540.40,178.10 541.30,178.10 542.20,178.10 543.10,178.10 544.00,178.10 544.90,178.10 545.80,178.10 546.70,178.10 547.60,178.10 548.50,178.10 549.41,178.10 550.31,178.10 551.21,178.10 552.11,178.10 553.01,178.10 553.91,178.10 554.81,178.10 555.71,178.10 556.61,178.10 557.51,178.10 558.42,178.10 559.32,178.10 560.22,178.10 561.12,178.10 562.02,178.10 562.92,178.10 563.82,178.10 564.72,178.10 565.62,178.10 566.52,178.10 567.43,178.10 568.33,178.10 569.23,178.10 570.13,178.10 571.03,178.10 571.93,178.10 572.83,178.10 573.73,178.10 574.63,178.10 575.53,178.10 576.44,178.10 577.34,178.10 578.24,178.10 579.14,178.10 580.04,178.10 580.94,178.10 581.84,178.10 582.74,178.10 583.64,178.10 584.54,178.10 585.45,178.10 586.35,178.10 587.25,178.10 588.15,178.10 589.05,178.10 589.95,178.10 590.85,178.10 591.75,178.10 592.65,178.10 593.55,178.10 594.46,178.10 595.36,178.10 596.26,178.10 597.16,178.10 598.06,178.10 598.96,178.10 599.86,178.10 600.76,178.10 601.66,178.10 602.56,178.10 603.47,178.10 604.37,178.10 605.27,178.10 606.17,178.10 607.07,178.10 607.97,178.10 608.87,178.10 609.77,178.10 610.67,178.10 611.57,178.10 612.48,178.10 613.38,178.10 614.28,178.10 615.18,178.10 616.08,178.10 616.98,178.10 617.88,178.10 618.78,178.10 619.68,178.10 620.58,178.10 621.49,178.10 622.39,178.10 623.29,178.10 624.19,178.10 625.09,178.10 625.99,178.10 626.89,178.10 627.79,178.10 628.69,178.10 629.59,178.10 630.50,178.10 631.40,178.10 632.30,178.10 633.20,178.10 634.10,178.10 635.00,178.10 635.90,178.10 636.80,178.10 637.70,178.10 638.60,178.10 639.51,178.10 640.41,178.10 641.31,178.10 642.21,178.10 643.11,178.10 644.01,178.10 644.91,178.10 645.81,178.10 646.71,178.10 647.61,178.10 648.52,178.10 649.42,178.10 650.32,178.10 651.22,178.10 652.12,178.10 653.02,178.10 653.92,178.10 654.82,178.10 655.72,178.10 656.62,178.10 657.53,178.10 658.43,178.10 659.33,178.10 660.23,178.10 661.13,178.10 662.03,178.10 662.93,178.10 663.83,178.10 664.73,178.10 665.63,178.10 666.54,178.10 667.44,178.28 668.34,179.03 669.24,179.78 670.14,180.54 671.04,181.29 671.94,182.04 672.84,182.80 673.74,183.55 674.64,184.30 675.55,185.06 676.45,185.81 677.35,186.56 678.25,187.32 679.15,188.07 680.05,188.82 680.95,189.58 681.85,190.33 682.75,191.08 683.65,191.84 684.56,192.59 685.46,193.34 686.36,194.10 687.26,194.85 688.16,195.60 689.06,196.35 689.96,197.11 690.86,197.86 691.76,198.61 692.66,199.37 693.57,200.12 694.47,200.87 695.37,201.63 696.27,202.38 697.17,203.13 698.07,203.89 698.97,204.64 699.87,205.39 700.77,206.15 701.67,206.90 702.58,207.65 703.48,208.41 704.38,209.16 705.28,209.91 706.18,210.67 707.08,211.42 707.98,212.17 708.88,212.93 709.78,213.68 710.68,214.43 711.59,215.19 712.49,215.94 713.39,216.69 714.29,217.45 715.19,218.20 716.09,218.95 716.99,219.71 717.89,220.46 718.79,221.21 719.69,221.97 720.60,222.72 721.50,223.47 722.40,224.23 723.30,224.98 724.20,225.73 725.10,226.49 726.00,227.24 726.90,227.99 727.80,228.75 728.70,229.50 729.61,230.25 730.51,231.01 731.41,231.76 732.31,232.51 733.21,233.27 734.11,234.02 735.01,234.77 735.91,235.53 736.81,236.28 737.71,237.03 738.62,237.79 739.52,238.54 740.42,239.29 741.32,240.05 742.22,240.80 743.12,241.55 744.02,242.31 744.92,243.06 745.82,243.81 746.72,244.57 747.63,245.32 748.53,246.07 749.43,246.83 750.33,247.58 751.23,248.33 752.13,249.09 753.03,249.84 753.93,250.59 754.83,251.35 755.73,252.10 756.64,252.85 757.54,253.61 758.44,254.36 759.34,255.11 760.24,255.86 761.14,256.62 762.04,257.37 762.94,258.12 763.84,258.88 764.74,259.63 765.65,260.38 766.55,261.14 767.45,261.89 768.35,262.64 769.25,263.40 770.15,264.15 771.05,264.90 771.95,265.66 772.85,266.41 773.75,267.16 774.66,267.92 775.56,268.67 776.46,269.42 777.36,270.18 778.26,270.93 779.16,271.68 780.06,272.44 780.96,273.19 781.86,273.94 782.76,274.70 783.67,275.45 784.57,276.20 785.47,276.96 786.37,277.71 787.27,278.46 788.17,279.22 789.07,279.97 789.97,280.72 790.87,281.48 791.77,282.23 792.68,282.98 793.58,283.74 794.48,284.49 795.38,285.24 796.28,286.00 797.18,286.75 798.08,287.50 798.98,288.26 799.88,289.01 800.78,289.76 801.69,290.52 802.59,291.27 803.49,292.02 804.39,292.78 805.29,293.53 806.19,294.28 807.09,295.04 807.99,295.79 808.89,296.54 809.79,297.30 810.70,298.05 811.60,298.80 812.50,299.56 813.40,300.31 814.30,301.06 815.20,301.82 816.10,302.57 817.00,303.32 817.90,304.08 818.80,304.83 819.71,305.58 820.61,306.34 821.51,307.09 822.41,307.84 823.31,308.60 824.21,309.35 825.11,310.10 826.01,310.86 826.91,311.61 827.81,312.36 828.72,313.11 829.62,313.87 830.52,314.62 831.42,315.37 832.32,316.13 833.22,316.88 834.12,317.63 835.02,318.39 835.92,319.14 836.82,319.89 837.73,320.65 838.63,321.40 839.53,322.15 840.43,322.91 841.33,323.66 842.23,324.41 843.13,325.17 844.03,325.92 844.93,326.67 845.83,327.43 846.74,328.18 847.64,328.93 848.54,329.69 849.44,330.44 850.34,331.19 851.24,331.95 852.14,332.70 853.04,333.45 853.94,334.21 854.84,334.96 855.75,335.71 856.65,336.47 857.55,337.22" fill="none" stroke="#9a9afa" stroke-width="2.9" stroke-linejoin="round"/>
<line x1="90" y1="192.8" x2="856.5" y2="192.8" stroke="#3a0c0c" stroke-width="1.2" />
<line x1="90" y1="191.5" x2="856.5" y2="191.5" stroke="#f0bcb0" stroke-width="1.4" />
<line x1="188.7" y1="161.5" x2="188.7" y2="462" stroke="#5a5a5a" stroke-width="1.3" />
<line x1="536.6" y1="160.4" x2="536.6" y2="462" stroke="#a4a430" stroke-width="1.4" />
</g>
</g>
</svg></body></html>
